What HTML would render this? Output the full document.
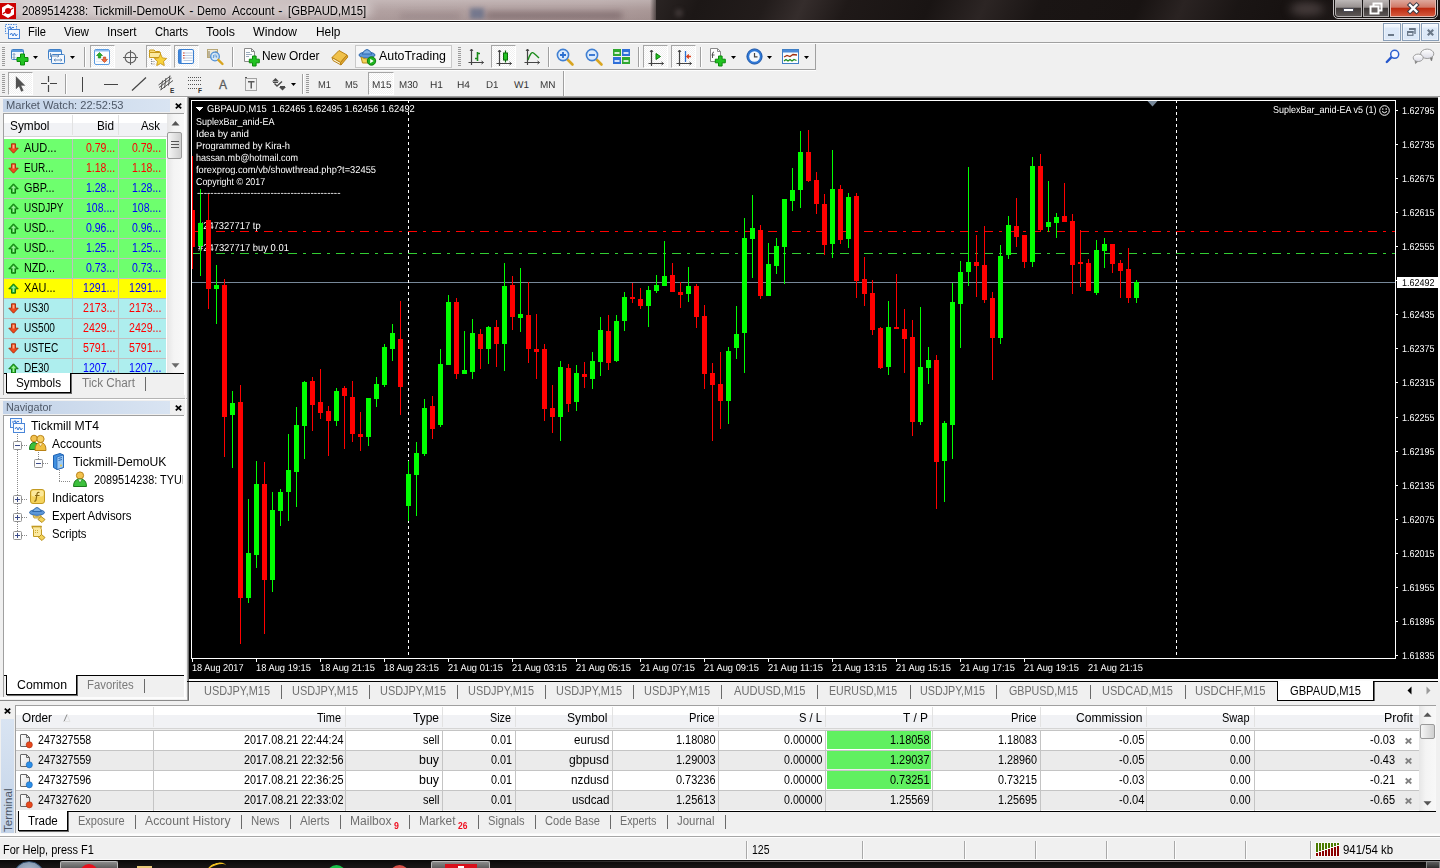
<!DOCTYPE html>
<html><head><meta charset="utf-8"><title>2089514238: Tickmill-DemoUK - Demo Account - [GBPAUD,M15]</title>
<style>
html,body{margin:0;padding:0}
body{width:1440px;height:868px;position:relative;overflow:hidden;background:#f0f0f0;font-family:"Liberation Sans",sans-serif}
.r{position:absolute;display:block}
.t{position:absolute;white-space:pre;display:block}
svg{overflow:visible}
</style></head><body>
<div class="r" style="left:0;top:0;width:1440px;height:20px;overflow:hidden;background:#1b1615"><div class="r" style="left:0;top:0;width:656px;height:20px;background:linear-gradient(90deg,#cabfc0 0,#bdafb0 110px,#b2a1a1 380px,#ae9c9c 600px,#a89695 656px)"></div><div class="r" style="left:0;top:0;width:656px;height:20px;background:linear-gradient(180deg,rgba(255,255,255,.24) 0,rgba(255,255,255,.1) 6px,rgba(255,255,255,0) 11px,rgba(40,20,20,.05) 19px)"></div><div class="r" style="left:18px;top:3px;width:355px;height:15px;border-radius:8px;background:rgba(255,255,255,.34);filter:blur(5px)"></div><div class="r" style="left:486px;top:12px;width:136px;height:7px;background:rgba(70,50,55,.38);filter:blur(3px)"></div><div class="r" style="left:400px;top:13px;width:60px;height:6px;background:rgba(70,50,55,.15);filter:blur(3px)"></div><div class="r" style="left:470px;top:8px;width:14px;height:11px;background:rgba(70,90,130,.55);filter:blur(2px)"></div><div class="r" style="left:650px;top:-2px;width:10px;height:24px;background:linear-gradient(90deg,rgba(27,22,21,0),#1b1615);"></div><div class="r" style="left:656px;top:0;width:784px;height:20px;background:linear-gradient(115deg,#2a2423 0,#1c1716 40px,#221c1b 100px,#352d2c 135px,#1f1918 175px,#191413 250px,#2c2524 300px,#1a1514 350px,#181312 440px,#2a2322 480px,#1a1514 530px,#15100f 600px,#241e1d 640px,#1b1615 700px)"></div><div class="r" style="left:1290px;top:2px;width:34px;height:14px;border-radius:50%;background:rgba(120,105,105,.5);filter:blur(5px)"></div><div class="r" style="left:675px;top:9px;width:8px;height:8px;border-radius:50%;background:rgba(90,80,80,.5);filter:blur(2px)"></div></div>
<div class="r" style="left:0px;top:20px;width:1440px;height:1px;background:rgba(255,255,255,.6);"></div>
<div class="r" style="left:0px;top:21px;width:1440px;height:1px;background:#141010;"></div>
<div class="r" style="left:0px;top:22px;width:1440px;height:1px;background:#ffffff;"></div>
<div class="r" style="left:0px;top:2px;width:16px;height:1px;background:rgba(255,255,255,.35);"></div>
<svg class="r" style="left:0px;top:3px;" width="16" height="16" viewBox="0 0 16 16"><rect width="16" height="16" fill="#cc0000"/><path d="M8 1 L14 4.400 V11.600 L8 15 L2 11.600 V4.400 Z" fill="#fff"/><circle cx="8" cy="7.900" r="3" fill="#cc0000"/><path d="M2.800 10.800 L6 8.800 M13.200 5 L10 7" stroke="#cc0000" stroke-width="1.300"/></svg>
<span class="t" style="top:5px;font-size:12.5px;line-height:12.5px;color:#000;left:21.80px;transform:scaleX(0.9068);transform-origin:0 0;text-shadow:0 0 5px rgba(255,255,255,.7);">2089514238:</span>
<span class="t" style="top:5px;font-size:12.5px;line-height:12.5px;color:#000;left:93.00px;transform:scaleX(0.9576);transform-origin:0 0;text-shadow:0 0 5px rgba(255,255,255,.7);">Tickmill-DemoUK</span>
<span class="t" style="top:5px;font-size:12.5px;line-height:12.5px;color:#000;left:189.30px;text-shadow:0 0 5px rgba(255,255,255,.7);">-</span>
<span class="t" style="top:5px;font-size:12.5px;line-height:12.5px;color:#000;left:196.80px;transform:scaleX(0.8757);transform-origin:0 0;text-shadow:0 0 5px rgba(255,255,255,.7);">Demo</span>
<span class="t" style="top:5px;font-size:12.5px;line-height:12.5px;color:#000;left:232.00px;transform:scaleX(0.9409);transform-origin:0 0;text-shadow:0 0 5px rgba(255,255,255,.7);">Account</span>
<span class="t" style="top:5px;font-size:12.5px;line-height:12.5px;color:#000;left:278.30px;text-shadow:0 0 5px rgba(255,255,255,.7);">-</span>
<span class="t" style="top:5px;font-size:12.5px;line-height:12.5px;color:#000;left:287.80px;transform:scaleX(0.9029);transform-origin:0 0;text-shadow:0 0 5px rgba(255,255,255,.7);">[GBPAUD,M15]</span>
<div class="r" style="left:1333px;top:-1px;width:105px;height:20px;border-radius:0 0 5px 5px;border:1px solid #c4c0c0;box-sizing:border-box;background:#161211"></div>
<div class="r" style="left:1335px;top:0;width:101px;height:17px;border-radius:0 0 3px 3px;overflow:hidden"><div class="r" style="left:0;top:0;width:27px;height:17px;box-sizing:border-box;border:1px solid #b4b0b0;border-top:none;border-radius:0 0 0 3px;background:linear-gradient(180deg,#bdb8b7 0,#979190 45%,#3f3a39 52%,#5c5655 100%)"></div><div class="r" style="left:28px;top:0;width:26px;height:17px;box-sizing:border-box;border:1px solid #b4b0b0;border-top:none;background:linear-gradient(180deg,#bdb8b7 0,#979190 45%,#3f3a39 52%,#5c5655 100%)"></div><div class="r" style="left:55px;top:0;width:46px;height:17px;box-sizing:border-box;border:1px solid #e4b8b0;border-top:none;border-radius:0 0 3px 0;background:linear-gradient(180deg,#dea89c 0,#d07866 45%,#bd2a10 52%,#d4583c 100%)"></div></div>
<svg class="r" style="left:1334px;top:0px;" width="103" height="18" viewBox="0 0 103 18"><rect x="9.5" y="8.5" width="10" height="3" fill="#fff" stroke="#4a4a55" stroke-width="1"/><rect x="39.5" y="3.5" width="8" height="7" fill="none" stroke="#fff" stroke-width="2"/><rect x="36.5" y="6.5" width="8" height="7" fill="#6a6463" stroke="#fff" stroke-width="2"/><path d="M76 5 L82.500 11.500 M82.500 5 L76 11.500" stroke="#3c3c48" stroke-width="4.4" stroke-linecap="square"/><path d="M76 5 L82.500 11.500 M82.500 5 L76 11.500" stroke="#fff" stroke-width="2.4" stroke-linecap="square"/></svg>
<div class="r" style="left:0px;top:23px;width:1440px;height:19px;background:#f0f0f0;"></div>
<div class="r" style="left:0px;top:42px;width:1440px;height:1px;background:#a0a0a0;"></div>
<div class="r" style="left:0px;top:43px;width:1440px;height:1px;background:#fdfdfd;"></div>
<svg class="r" style="left:5px;top:24px;" width="16" height="16" viewBox="0 0 16 16"><rect x="0.5" y="0.5" width="11" height="9" fill="#eef4fc" stroke="#4a86d8" stroke-dasharray="1.5 1"/><rect x="3.5" y="5.5" width="11" height="9" fill="#f4f8fe" stroke="#4a86d8"/><path d="M5 11 l1.5 -2 l1.5 3 l1.5 -3 l1.5 3 l1.5 -2" stroke="#3b7bd6" fill="none" stroke-width="1"/><path d="M2 4 h2 l1 -1.5 l1 2.5 l1 -1.5 h2" stroke="#3b7bd6" fill="none" stroke-width="1"/></svg>
<span class="t" style="top:26px;font-size:12px;line-height:12px;color:#000;left:28.00px;transform:scaleX(0.9305);transform-origin:0 0;">File</span>
<span class="t" style="top:26px;font-size:12px;line-height:12px;color:#000;left:64.00px;transform:scaleX(0.9691);transform-origin:0 0;">View</span>
<span class="t" style="top:26px;font-size:12px;line-height:12px;color:#000;left:106.50px;transform:scaleX(0.9828);transform-origin:0 0;">Insert</span>
<span class="t" style="top:26px;font-size:12px;line-height:12px;color:#000;left:154.50px;transform:scaleX(0.9337);transform-origin:0 0;">Charts</span>
<span class="t" style="top:26px;font-size:12px;line-height:12px;color:#000;left:206.00px;transform:scaleX(1.0351);transform-origin:0 0;">Tools</span>
<span class="t" style="top:26px;font-size:12px;line-height:12px;color:#000;left:253.00px;transform:scaleX(1.0307);transform-origin:0 0;">Window</span>
<span class="t" style="top:26px;font-size:12px;line-height:12px;color:#000;left:315.50px;transform:scaleX(0.9924);transform-origin:0 0;">Help</span>
<div class="r" style="left:1383px;top:23px;width:18px;height:18px;box-sizing:border-box;border:1px solid #8a9fb8;background:linear-gradient(180deg,#f2f7fd 0,#eef4fc 3px,#dde9f8 4px,#dce8f7 100%);box-shadow:inset 0 0 0 1px rgba(255,255,255,.4)"></div>
<div class="r" style="left:1402px;top:23px;width:18px;height:18px;box-sizing:border-box;border:1px solid #8a9fb8;background:linear-gradient(180deg,#f2f7fd 0,#eef4fc 3px,#dde9f8 4px,#dce8f7 100%);box-shadow:inset 0 0 0 1px rgba(255,255,255,.4)"></div>
<div class="r" style="left:1421px;top:23px;width:18px;height:18px;box-sizing:border-box;border:1px solid #8a9fb8;background:linear-gradient(180deg,#f2f7fd 0,#eef4fc 3px,#dde9f8 4px,#dce8f7 100%);box-shadow:inset 0 0 0 1px rgba(255,255,255,.4)"></div>
<svg class="r" style="left:1383px;top:23px;" width="56" height="18" viewBox="0 0 56 18"><rect x="5" y="11" width="6" height="2" fill="#6a7888"/><path d="M26.500 6 h5.500 v5" fill="none" stroke="#6a7888" stroke-width="1.400"/><rect x="26" y="5" width="6.500" height="2" fill="#6a7888"/><rect x="24.600" y="8.600" width="5.300" height="3.700" fill="#e6eefa" stroke="#6a7888" stroke-width="1.200"/><rect x="24" y="8" width="6.500" height="2" fill="#6a7888"/><path d="M44.800 6.800 L50.200 12.200 M50.200 6.800 L44.800 12.200" stroke="#6a7888" stroke-width="2.200"/></svg>
<div class="r" style="left:0px;top:44px;width:1440px;height:52px;background:#f0f0f0;"></div>
<div class="r" style="left:0px;top:69px;width:816px;height:1px;background:#a0a0a0;"></div>
<div class="r" style="left:0px;top:70px;width:816px;height:1px;background:#fdfdfd;"></div>
<div class="r" style="left:815px;top:44px;width:1px;height:26px;background:#a0a0a0;"></div>
<div class="r" style="left:0px;top:96px;width:1440px;height:1px;background:#a0a0a0;"></div>
<div class="r" style="left:563px;top:71px;width:1px;height:25px;background:#a0a0a0;"></div>
<div class="r" style="left:564px;top:71px;width:1px;height:25px;background:#fdfdfd;"></div>
<svg class="r" style="left:2px;top:47px;" width="3" height="20" viewBox="0 0 3 20"><rect x="0" y="0" width="3" height="1" fill="#9a9a9a"/><rect x="0" y="2" width="3" height="1" fill="#9a9a9a"/><rect x="0" y="4" width="3" height="1" fill="#9a9a9a"/><rect x="0" y="6" width="3" height="1" fill="#9a9a9a"/><rect x="0" y="8" width="3" height="1" fill="#9a9a9a"/><rect x="0" y="10" width="3" height="1" fill="#9a9a9a"/><rect x="0" y="12" width="3" height="1" fill="#9a9a9a"/><rect x="0" y="14" width="3" height="1" fill="#9a9a9a"/><rect x="0" y="16" width="3" height="1" fill="#9a9a9a"/><rect x="0" y="18" width="3" height="1" fill="#9a9a9a"/></svg>
<svg class="r" style="left:11px;top:48px;" width="18" height="18" viewBox="0 0 18 18"><rect x="0.5" y="1.5" width="12" height="10" rx="1" fill="#f2f7fd" stroke="#3f7fc6"/><rect x="1" y="2" width="11" height="2" fill="#5c9be0"/><path d="M3 5.5 v5 M1.8 6.8 L3 5.5 L4.2 6.8 M1.8 9.2 L3 10.5 L4.2 9.2" stroke="#7a96b8" fill="none"/><path d="M9.5 6 h4 v3.5 h3.500 v4 h-3.500 v3.500 h-4 v-3.500 h-3.500 v-4 h3.500 z" fill="#22c322" stroke="#0a8a0a" stroke-width="1"/></svg>
<svg class="r" style="left:33px;top:56px;" width="5" height="3" viewBox="0 0 5 3"><path d="M0 0 h5 l-2.5 3 z" fill="#000"/></svg>
<svg class="r" style="left:48px;top:48px;" width="18" height="18" viewBox="0 0 18 18"><rect x="0.5" y="1.500" width="13" height="10" rx="1" fill="#f2f7fd" stroke="#3f7fc6"/><rect x="1" y="2" width="12" height="2" fill="#5c9be0"/><rect x="3.500" y="6.500" width="13" height="9" rx="1" fill="#f2f7fd" stroke="#3f7fc6"/><path d="M2.500 5 v4 M3 8 h8 M9.500 6.800 L11 8 L9.500 9.200" stroke="#6d8fb8" fill="none"/><path d="M6 12 h8 M7.500 10.800 L6 12 L7.500 13.200 M12.500 10.800 L14 12 L12.500 13.200" stroke="#6d8fb8" fill="none"/></svg>
<svg class="r" style="left:70px;top:56px;" width="5" height="3" viewBox="0 0 5 3"><path d="M0 0 h5 l-2.5 3 z" fill="#000"/></svg>
<div class="r" style="left:84px;top:47px;width:1px;height:20px;background:#a0a0a0;"></div>
<div class="r" style="left:85px;top:47px;width:1px;height:20px;background:#ffffff;"></div>
<div class="r" style="left:90px;top:45px;width:25px;height:23px;box-sizing:border-box;border:1px solid #fff;border-top-color:#a6a6a6;border-left-color:#a6a6a6;background:repeating-conic-gradient(#ffffff 0 25%,#f0f0f0 0 50%) 0 0/2px 2px"></div>
<svg class="r" style="left:94px;top:49px;" width="17" height="17" viewBox="0 0 17 17"><rect x="0.500" y="0.500" width="15" height="15" rx="1.500" fill="#fbfdff" stroke="#5b9be0"/><rect x="1" y="1" width="14" height="1.500" fill="#8fbdf0"/><path d="M2 12.500 h12 M2 10 h12" stroke="#e3e9f2" stroke-width="1"/><path d="M5.500 3.500 l3 3 h-1.800 v2.500 h-2.400 v-2.500 h-1.800 z" fill="#25b325" stroke="#0c7a0c" stroke-width=".6"/><path d="M10.500 13.500 l-3 -3 h1.800 v-2.500 h2.400 v2.500 h1.800 z" fill="#f06a3a" stroke="#b83a10" stroke-width=".6"/></svg>
<svg class="r" style="left:122px;top:49px;" width="16" height="16" viewBox="0 0 16 16"><circle cx="8.500" cy="8.500" r="5.400" fill="none" stroke="#5e5e5e" stroke-width="1.100"/><path d="M8.500 1 v15 M1 8.500 h15" stroke="#5e5e5e" stroke-width="1"/></svg>
<div class="r" style="left:146px;top:45px;width:25px;height:23px;box-sizing:border-box;border:1px solid #fff;border-top-color:#a6a6a6;border-left-color:#a6a6a6;background:repeating-conic-gradient(#ffffff 0 25%,#f0f0f0 0 50%) 0 0/2px 2px"></div>
<svg class="r" style="left:149px;top:48px;" width="19" height="19" viewBox="0 0 19 19"><path d="M0.500 4.500 v-2.500 h4.500 l1.500 1.500 h4 v2" fill="#f7d977" stroke="#c79a1c"/><path d="M0.500 4.500 h11 v5 h-11 z" fill="#fbe9a0" stroke="#c79a1c"/><path d="M2.500 11 v5 M2.500 13.500 h3 M2.500 16 h3" stroke="#888" stroke-dasharray="1 1" fill="none"/><path d="M11.500 6 l1.900 3.900 l4.200 .6 l-3.100 2.900 l.8 4.200 l-3.800 -2 l-3.800 2 l.8 -4.200 l-3.100 -2.900 l4.200 -.6 z" fill="#f8d23a" stroke="#c8961a" stroke-width=".9"/></svg>
<div class="r" style="left:174px;top:45px;width:25px;height:23px;box-sizing:border-box;border:1px solid #fff;border-top-color:#a6a6a6;border-left-color:#a6a6a6;background:repeating-conic-gradient(#ffffff 0 25%,#f0f0f0 0 50%) 0 0/2px 2px"></div>
<svg class="r" style="left:178px;top:49px;" width="17" height="17" viewBox="0 0 17 17"><rect x="0.500" y="0.500" width="15" height="14" rx="1.500" fill="#fbfdff" stroke="#3b7fd0" stroke-width="1.100"/><rect x="1" y="1" width="2.600" height="13" fill="#3f86dc"/><path d="M5.500 4 h9 M5.500 6.500 h9 M5.500 9 h9 M5.500 11.500 h9" stroke="#bccbe0" stroke-width="1"/><path d="M5 4 h1.500 M5 6.500 h1.500 M5 9 h1.500" stroke="#e0442c" stroke-width="1.200"/></svg>
<svg class="r" style="left:206px;top:47px;" width="19" height="20" viewBox="0 0 19 20"><rect x="1.500" y="2.500" width="10" height="8" fill="#efe9d6" stroke="#b8a878"/><path d="M3 4 v6 M10 4 v6" stroke="#8a7c58"/><circle cx="9" cy="9.500" r="4.300" fill="#cfe6fb" fill-opacity=".85" stroke="#4f8fd6" stroke-width="1.300"/><path d="M7.500 8 v3 M9 7.300 v2.500 M10.500 8.500 v2" stroke="#4f8fd6" stroke-width=".8"/><path d="M12.300 12.800 L16.500 17" stroke="#d9a520" stroke-width="2.400" stroke-linecap="round"/></svg>
<div class="r" style="left:232px;top:47px;width:1px;height:20px;background:#a0a0a0;"></div>
<div class="r" style="left:233px;top:47px;width:1px;height:20px;background:#ffffff;"></div>
<svg class="r" style="left:243px;top:48px;" width="18" height="18" viewBox="0 0 18 18"><path d="M1.500 0.500 h7 l3 3 v10 h-10 z" fill="#fdfdfd" stroke="#8a8a8a"/><path d="M8.500 0.500 v3 h3" fill="none" stroke="#8a8a8a"/><path d="M3 4.500 h4 M3 6.500 h6 M3 8.500 h3" stroke="#9ab" stroke-width="1"/><path d="M9.500 8 h3.600 v3.200 h3.200 v3.600 h-3.200 v3.200 h-3.600 v-3.200 h-3.200 v-3.600 h3.200 z" fill="#22c322" stroke="#0a8a0a"/></svg>
<span class="t" style="top:50px;font-size:12px;line-height:12px;color:#000;left:262.00px;transform:scaleX(0.9911);transform-origin:0 0;">New Order</span>
<svg class="r" style="left:331px;top:48px;" width="18" height="18" viewBox="0 0 18 18"><path d="M1 9.500 L8 2.500 L16 7 L9.500 14.500 Z" fill="#f0c14a" stroke="#b98216"/><path d="M1 9.500 L2 12.500 L10 17 L9.500 14.500 Z" fill="#fff4cf" stroke="#b98216"/><path d="M9.500 14.500 L16 7 L16.800 9 L10 17 Z" fill="#e0a62c" stroke="#b98216"/></svg>
<div class="r" style="left:355px;top:45px;width:97px;height:23px;box-sizing:border-box;border:1px solid #c9c9c9;background:#f7f7f7"></div>
<svg class="r" style="left:358px;top:47px;" width="20" height="20" viewBox="0 0 20 20"><ellipse cx="9" cy="8" rx="8" ry="3" fill="#5d97d8" stroke="#2f69ad"/><path d="M4 7 q5 -9 10 0 z" fill="#7fb1e6" stroke="#2f69ad"/><path d="M3 10 q6 4 12 0 l-1.500 6 h-9 z" fill="#f4d35a" stroke="#b78f1c"/><circle cx="13.500" cy="14" r="4.200" fill="#1fb31f" stroke="#0b7d0b"/><path d="M12.200 11.800 v4.400 l3.500 -2.200 z" fill="#fff"/></svg>
<span class="t" style="top:50px;font-size:12px;line-height:12px;color:#000;left:379.00px;transform:scaleX(1.0318);transform-origin:0 0;">AutoTrading</span>
<svg class="r" style="left:458px;top:47px;" width="3" height="20" viewBox="0 0 3 20"><rect x="0" y="0" width="3" height="1" fill="#9a9a9a"/><rect x="0" y="2" width="3" height="1" fill="#9a9a9a"/><rect x="0" y="4" width="3" height="1" fill="#9a9a9a"/><rect x="0" y="6" width="3" height="1" fill="#9a9a9a"/><rect x="0" y="8" width="3" height="1" fill="#9a9a9a"/><rect x="0" y="10" width="3" height="1" fill="#9a9a9a"/><rect x="0" y="12" width="3" height="1" fill="#9a9a9a"/><rect x="0" y="14" width="3" height="1" fill="#9a9a9a"/><rect x="0" y="16" width="3" height="1" fill="#9a9a9a"/><rect x="0" y="18" width="3" height="1" fill="#9a9a9a"/></svg>
<svg class="r" style="left:468px;top:49px;" width="17" height="17" viewBox="0 0 17 17"><path d="M3.500 0 v16 M0.500 13.500 h15" stroke="#444" stroke-width="1.200" fill="none"/><path d="M2 2 L3.500 0 L5 2 M13.500 12 L15.500 13.500 L13.500 15" stroke="#444" fill="none"/><path d="M9.500 3 v9 M7 9.500 h2.500 M9.500 4.500 h2.500" stroke="#1a8a1a" stroke-width="1.600" fill="none"/></svg>
<div class="r" style="left:491px;top:45px;width:25px;height:23px;box-sizing:border-box;border:1px solid #fff;border-top-color:#a6a6a6;border-left-color:#a6a6a6;background:repeating-conic-gradient(#ffffff 0 25%,#f0f0f0 0 50%) 0 0/2px 2px"></div>
<svg class="r" style="left:496px;top:50px;" width="17" height="17" viewBox="0 0 17 17"><path d="M3.500 0 v16 M0.500 13.500 h15" stroke="#444" stroke-width="1.200" fill="none"/><path d="M2 2 L3.500 0 L5 2 M13.500 12 L15.500 13.500 L13.500 15" stroke="#444" fill="none"/><path d="M9.500 0.500 v12" stroke="#0b6d0b" stroke-width="1.200"/><rect x="7.500" y="3" width="4" height="7" fill="#22c322" stroke="#0b6d0b"/></svg>
<svg class="r" style="left:524px;top:49px;" width="17" height="17" viewBox="0 0 17 17"><path d="M3.500 0 v16 M0.500 13.500 h15" stroke="#444" stroke-width="1.200" fill="none"/><path d="M2 2 L3.500 0 L5 2 M13.500 12 L15.500 13.500 L13.500 15" stroke="#444" fill="none"/><path d="M4 11 Q7 2 9.500 4 T15 9" stroke="#1a8a1a" stroke-width="1.400" fill="none"/></svg>
<div class="r" style="left:548px;top:47px;width:1px;height:20px;background:#a0a0a0;"></div>
<div class="r" style="left:549px;top:47px;width:1px;height:20px;background:#ffffff;"></div>
<svg class="r" style="left:556px;top:48px;" width="19" height="19" viewBox="0 0 19 19"><path d="M11 11 L16.500 16.500" stroke="#d9a520" stroke-width="2.600" stroke-linecap="round"/><circle cx="7" cy="7" r="5.600" fill="#dcebfb" stroke="#3f7fd2" stroke-width="1.600"/><path d="M4 7 h6 M7 4 v6" stroke="#2b6fd0" stroke-width="1.800"/></svg>
<svg class="r" style="left:585px;top:48px;" width="19" height="19" viewBox="0 0 19 19"><path d="M11 11 L16.500 16.500" stroke="#d9a520" stroke-width="2.600" stroke-linecap="round"/><circle cx="7" cy="7" r="5.600" fill="#dcebfb" stroke="#3f7fd2" stroke-width="1.600"/><path d="M4 7 h6" stroke="#2b6fd0" stroke-width="1.800"/></svg>
<svg class="r" style="left:613px;top:48px;" width="18" height="18" viewBox="0 0 18 18"><rect x="0" y="1" width="8" height="7" fill="#2fa82f"/><rect x="9" y="1" width="8" height="7" fill="#2f6fd8"/><rect x="0" y="9" width="8" height="7" fill="#2f6fd8"/><rect x="9" y="9" width="8" height="7" fill="#2fa82f"/><rect x="1.500" y="4" width="5" height="2" fill="#d8f0d8"/><rect x="10.500" y="4" width="5" height="2" fill="#d4e2fb"/><rect x="1.500" y="12" width="5" height="2" fill="#d4e2fb"/><rect x="10.500" y="12" width="5" height="2" fill="#d8f0d8"/></svg>
<div class="r" style="left:638px;top:47px;width:1px;height:20px;background:#a0a0a0;"></div>
<div class="r" style="left:639px;top:47px;width:1px;height:20px;background:#ffffff;"></div>
<div class="r" style="left:643px;top:45px;width:25px;height:23px;box-sizing:border-box;border:1px solid #fff;border-top-color:#a6a6a6;border-left-color:#a6a6a6;background:repeating-conic-gradient(#ffffff 0 25%,#f0f0f0 0 50%) 0 0/2px 2px"></div>
<svg class="r" style="left:648px;top:50px;" width="17" height="17" viewBox="0 0 17 17"><path d="M3.500 0 v16 M0.500 13.500 h15" stroke="#444" stroke-width="1.200" fill="none"/><path d="M2 2 L3.500 0 L5 2 M13.500 12 L15.500 13.500 L13.500 15" stroke="#444" fill="none"/><path d="M8 3.500 L12.500 6.500 L8 9.500 Z" fill="#22c322" stroke="#0b7d0b"/></svg>
<div class="r" style="left:671px;top:45px;width:25px;height:23px;box-sizing:border-box;border:1px solid #fff;border-top-color:#a6a6a6;border-left-color:#a6a6a6;background:repeating-conic-gradient(#ffffff 0 25%,#f0f0f0 0 50%) 0 0/2px 2px"></div>
<svg class="r" style="left:676px;top:50px;" width="17" height="17" viewBox="0 0 17 17"><path d="M3.500 0 v16 M0.500 13.500 h15" stroke="#444" stroke-width="1.200" fill="none"/><path d="M2 2 L3.500 0 L5 2 M13.500 12 L15.500 13.500 L13.500 15" stroke="#444" fill="none"/><path d="M9.500 1 v11" stroke="#2b6fd0" stroke-width="1.300"/><path d="M15 6.500 h-4 M12.800 4.500 L10.800 6.500 L12.800 8.500" stroke="#d8401c" stroke-width="1.300" fill="none"/></svg>
<div class="r" style="left:700px;top:47px;width:1px;height:20px;background:#a0a0a0;"></div>
<div class="r" style="left:701px;top:47px;width:1px;height:20px;background:#ffffff;"></div>
<svg class="r" style="left:709px;top:48px;" width="19" height="19" viewBox="0 0 19 19"><path d="M1.500 0.500 h7 l3 3 v10 h-10 z" fill="#fdfdfd" stroke="#8a8a8a"/><path d="M8.500 0.500 v3 h3" fill="none" stroke="#8a8a8a"/><path d="M5 4 q-1.500 0 -1.500 2 v4 M2.500 7 h3" stroke="#555" fill="none"/><path d="M9.500 8 h3.600 v3.200 h3.200 v3.600 h-3.200 v3.200 h-3.600 v-3.200 h-3.200 v-3.600 h3.200 z" fill="#22c322" stroke="#0a8a0a"/></svg>
<svg class="r" style="left:731px;top:56px;" width="5" height="3" viewBox="0 0 5 3"><path d="M0 0 h5 l-2.5 3 z" fill="#000"/></svg>
<svg class="r" style="left:746px;top:48px;" width="18" height="18" viewBox="0 0 18 18"><circle cx="8.500" cy="8.500" r="7.600" fill="#2f78d6" stroke="#1b55a8"/><circle cx="8.500" cy="8.500" r="5.300" fill="#f4f8fd"/><path d="M8.500 5 v3.800 h3" stroke="#444" stroke-width="1.200" fill="none"/></svg>
<svg class="r" style="left:767px;top:56px;" width="5" height="3" viewBox="0 0 5 3"><path d="M0 0 h5 l-2.5 3 z" fill="#000"/></svg>
<svg class="r" style="left:782px;top:49px;" width="18" height="16" viewBox="0 0 18 16"><rect x="0.500" y="0.500" width="16" height="14" fill="#fbfdff" stroke="#3f7fc6"/><rect x="1" y="1" width="15" height="2.500" fill="#4a8ad8"/><path d="M2 8 l3 -1.500 l3 1 l3 -2 l4 .5" stroke="#a03010" stroke-width="1.300" fill="none"/><path d="M2 12 l2 -1.500 l2 1.500 l2 -1.500 l2 1.500 l2 -1.500 l2.500 1" stroke="#1a8a1a" stroke-width="1.300" fill="none"/></svg>
<svg class="r" style="left:804px;top:56px;" width="5" height="3" viewBox="0 0 5 3"><path d="M0 0 h5 l-2.5 3 z" fill="#000"/></svg>
<svg class="r" style="left:1384px;top:48px;" width="16" height="17" viewBox="0 0 16 17"><path d="M2.800 14 L7.500 9.200" stroke="#2456cc" stroke-width="2.400" stroke-linecap="round"/><circle cx="10.700" cy="6.300" r="4" fill="#f6f8ff" stroke="#2c5fd0" stroke-width="1.500"/></svg>
<svg class="r" style="left:1412px;top:48px;" width="26" height="18" viewBox="0 0 26 18"><defs><linearGradient id="cb" x1="0" y1="0" x2="0" y2="1"><stop offset="0" stop-color="#ffffff"/><stop offset="1" stop-color="#dcdce6"/></linearGradient></defs><path d="M18 9.800 L19.500 13 L20.500 9.500 Z" fill="#777" stroke="#777" stroke-width=".6"/><ellipse cx="15.200" cy="5.800" rx="6.600" ry="4.700" fill="url(#cb)" stroke="#9c9c9c" stroke-width="1"/><path d="M3 12.500 L3.500 15.600 L6 13.300 Z" fill="#777" stroke="#777" stroke-width=".6"/><ellipse cx="6.200" cy="9.800" rx="5" ry="3.700" fill="url(#cb)" stroke="#9c9c9c" stroke-width="1"/></svg>
<svg class="r" style="left:2px;top:74px;" width="3" height="20" viewBox="0 0 3 20"><rect x="0" y="0" width="3" height="1" fill="#9a9a9a"/><rect x="0" y="2" width="3" height="1" fill="#9a9a9a"/><rect x="0" y="4" width="3" height="1" fill="#9a9a9a"/><rect x="0" y="6" width="3" height="1" fill="#9a9a9a"/><rect x="0" y="8" width="3" height="1" fill="#9a9a9a"/><rect x="0" y="10" width="3" height="1" fill="#9a9a9a"/><rect x="0" y="12" width="3" height="1" fill="#9a9a9a"/><rect x="0" y="14" width="3" height="1" fill="#9a9a9a"/><rect x="0" y="16" width="3" height="1" fill="#9a9a9a"/><rect x="0" y="18" width="3" height="1" fill="#9a9a9a"/></svg>
<div class="r" style="left:8px;top:72px;width:25px;height:23px;box-sizing:border-box;border:1px solid #fff;border-top-color:#a6a6a6;border-left-color:#a6a6a6;background:repeating-conic-gradient(#ffffff 0 25%,#f0f0f0 0 50%) 0 0/2px 2px"></div>
<svg class="r" style="left:15px;top:76px;" width="11" height="17" viewBox="0 0 11 17"><path d="M1 0.500 V13 L4 10.200 L6.300 15.500 L8.300 14.600 L6 9.500 H10 Z" fill="#505050" stroke="#505050" stroke-width=".3"/></svg>
<svg class="r" style="left:41px;top:76px;" width="16" height="16" viewBox="0 0 16 16"><path d="M7.500 0 v6 M7.500 9 v7 M0 7.500 h6 M9 7.500 h7" stroke="#444" stroke-width="1.200"/></svg>
<div class="r" style="left:65px;top:74px;width:1px;height:20px;background:#a0a0a0;"></div>
<div class="r" style="left:66px;top:74px;width:1px;height:20px;background:#ffffff;"></div>
<div class="r" style="left:82px;top:77px;width:1px;height:15px;background:#444;"></div>
<div class="r" style="left:104px;top:84px;width:14px;height:1px;background:#444;"></div>
<svg class="r" style="left:131px;top:76px;" width="16" height="16" viewBox="0 0 16 16"><path d="M1 14.500 L15 1.500" stroke="#444" stroke-width="1.200"/></svg>
<svg class="r" style="left:158px;top:75px;" width="17" height="17" viewBox="0 0 17 17"><path d="M1 12.500 L13.500 3 M2.500 15 L15 5.500 M0.500 10 L12 1.300" stroke="#555" stroke-width="1"/><path d="M4.500 5.500 L3 15 M8 3 L6.500 13 M12 0.500 L10.500 10.500" stroke="#555" stroke-width="1"/></svg>
<span class="t" style="top:88px;font-size:6.5px;line-height:6.5px;color:#333;left:170.00px;font-weight:bold;">E</span>
<svg class="r" style="left:188px;top:77px;" width="14" height="13" viewBox="0 0 14 13"><path d="M0 0.500 h13 M0 3.500 h13 M0 7.500 h13 M0 11.500 h9" stroke="#555" stroke-width="1" stroke-dasharray="1 1"/></svg>
<span class="t" style="top:88px;font-size:6.5px;line-height:6.5px;color:#333;left:198.00px;font-weight:bold;">F</span>
<span class="t" style="top:79px;font-size:12px;line-height:12px;color:#5a5a5a;left:218.90px;-webkit-text-stroke:.3px #5a5a5a;">A</span>
<svg class="r" style="left:245px;top:77px;" width="13" height="14" viewBox="0 0 13 14"><rect x="0.500" y="1.500" width="11" height="12" fill="none" stroke="#555" stroke-dasharray="1 1"/><path d="M3 4.800 h6.500 M6.250 4.800 v6.700" stroke="#5a5a5a" stroke-width="1.500"/><rect x="0" y="0" width="2" height="1" fill="#555"/></svg>
<svg class="r" style="left:271px;top:77px;" width="16" height="15" viewBox="0 0 16 15"><path d="M4.500 1 L8 4.500 H1 Z" fill="#4a4a4a"/><path d="M11.500 13.500 L15 10 H8 Z" fill="#4a4a4a"/><path d="M3.500 6.500 L6 9 L11 4.500" stroke="#4a4a4a" stroke-width="1.400" fill="none"/><path d="M2 5.500 h5 M9 9.500 h5" stroke="#4a4a4a" stroke-width="1"/></svg>
<svg class="r" style="left:291px;top:83px;" width="5" height="3" viewBox="0 0 5 3"><path d="M0 0 h5 l-2.5 3 z" fill="#000"/></svg>
<div class="r" style="left:302px;top:74px;width:1px;height:20px;background:#a0a0a0;"></div>
<div class="r" style="left:303px;top:74px;width:1px;height:20px;background:#ffffff;"></div>
<svg class="r" style="left:306px;top:74px;" width="3" height="20" viewBox="0 0 3 20"><rect x="0" y="0" width="3" height="1" fill="#9a9a9a"/><rect x="0" y="2" width="3" height="1" fill="#9a9a9a"/><rect x="0" y="4" width="3" height="1" fill="#9a9a9a"/><rect x="0" y="6" width="3" height="1" fill="#9a9a9a"/><rect x="0" y="8" width="3" height="1" fill="#9a9a9a"/><rect x="0" y="10" width="3" height="1" fill="#9a9a9a"/><rect x="0" y="12" width="3" height="1" fill="#9a9a9a"/><rect x="0" y="14" width="3" height="1" fill="#9a9a9a"/><rect x="0" y="16" width="3" height="1" fill="#9a9a9a"/><rect x="0" y="18" width="3" height="1" fill="#9a9a9a"/></svg>
<div class="r" style="left:368px;top:72px;width:26px;height:23px;box-sizing:border-box;border:1px solid #fff;border-top-color:#a6a6a6;border-left-color:#a6a6a6;background:repeating-conic-gradient(#ffffff 0 25%,#f0f0f0 0 50%) 0 0/2px 2px"></div>
<span class="t" style="top:81px;font-size:10px;line-height:10px;color:#333;left:318.00px;transform:scaleX(0.9348);transform-origin:0 0;text-rendering:geometricPrecision;">M1</span>
<span class="t" style="top:81px;font-size:10px;line-height:10px;color:#333;left:345.00px;transform:scaleX(0.9348);transform-origin:0 0;text-rendering:geometricPrecision;">M5</span>
<span class="t" style="top:81px;font-size:10px;line-height:10px;color:#333;left:371.50px;transform:scaleX(1.0024);transform-origin:0 0;text-rendering:geometricPrecision;">M15</span>
<span class="t" style="top:81px;font-size:10px;line-height:10px;color:#333;left:399.00px;transform:scaleX(0.9767);transform-origin:0 0;text-rendering:geometricPrecision;">M30</span>
<span class="t" style="top:81px;font-size:10px;line-height:10px;color:#333;left:430.00px;transform:scaleX(1.0159);transform-origin:0 0;text-rendering:geometricPrecision;">H1</span>
<span class="t" style="top:81px;font-size:10px;line-height:10px;color:#333;left:457.00px;transform:scaleX(1.0159);transform-origin:0 0;text-rendering:geometricPrecision;">H4</span>
<span class="t" style="top:81px;font-size:10px;line-height:10px;color:#333;left:486.00px;transform:scaleX(0.9768);transform-origin:0 0;text-rendering:geometricPrecision;">D1</span>
<span class="t" style="top:81px;font-size:10px;line-height:10px;color:#333;left:514.00px;transform:scaleX(1.0000);transform-origin:0 0;text-rendering:geometricPrecision;">W1</span>
<span class="t" style="top:81px;font-size:10px;line-height:10px;color:#333;left:540.00px;transform:scaleX(0.9960);transform-origin:0 0;text-rendering:geometricPrecision;">MN</span>
<div class="r" style="left:0px;top:97px;width:187px;height:603px;background:#f0f0f0;"></div>
<div class="r" style="left:0px;top:97px;width:187px;height:1px;background:#ffffff;"></div>
<div class="r" style="left:187px;top:97px;width:1px;height:604px;background:#a8a8a8;"></div>
<div class="r" style="left:188px;top:97px;width:1px;height:604px;background:#6e6e6e;"></div>
<div class="r" style="left:0px;top:697px;width:187px;height:2px;background:#fcfcfc;"></div>
<div class="r" style="left:0px;top:700px;width:189px;height:1px;background:#8a8a8a;"></div>
<div class="r" style="left:3px;top:99px;width:167px;height:13px;background:linear-gradient(90deg,#c3d3e8,#d9e4f2)"></div>
<span class="t" style="top:100px;font-size:11.5px;line-height:11.5px;color:#4d5766;left:5.50px;transform:scaleX(0.9657);transform-origin:0 0;">Market Watch: 22:52:53</span>
<svg class="r" style="left:174.5px;top:102.5px;" width="7" height="6" viewBox="0 0 7 6"><path d="M0.800 0.600 L6.200 5.400 M6.200 0.600 L0.800 5.400" stroke="#000" stroke-width="1.800"/></svg>
<div class="r" style="left:3px;top:113px;width:181px;height:1px;background:#a0a0a0;"></div>
<div class="r" style="left:3px;top:113px;width:1px;height:282px;background:#a0a0a0;"></div>
<div class="r" style="left:184px;top:113px;width:1px;height:282px;background:#ffffff;"></div>
<div class="r" style="left:4px;top:114px;width:163px;height:259px;background:#ffffff;"></div>
<div class="r" style="left:4px;top:114px;width:163px;height:22px;background:linear-gradient(180deg,#ffffff 0,#ffffff 9px,#f1f2f5 9px,#f1f2f5 100%)"></div>
<div class="r" style="left:4px;top:136px;width:163px;height:1px;background:#d5d5d5;"></div>
<div class="r" style="left:72px;top:115px;width:1px;height:20px;background:#e2e2e2;"></div>
<div class="r" style="left:118px;top:115px;width:1px;height:20px;background:#e2e2e2;"></div>
<span class="t" style="top:120px;font-size:12.5px;line-height:12.5px;color:#000;left:10.00px;transform:scaleX(0.9475);transform-origin:0 0;">Symbol</span>
<span class="t" style="top:120px;font-size:12.5px;line-height:12.5px;color:#000;left:96.50px;transform:scaleX(0.9404);transform-origin:0 0;">Bid</span>
<span class="t" style="top:120px;font-size:12.5px;line-height:12.5px;color:#000;left:141.00px;transform:scaleX(0.9115);transform-origin:0 0;">Ask</span>
<div class="r" style="left:4px;top:139px;width:162px;height:234px;overflow:hidden;background:#c0c0c0">
<div class="r" style="left:0px;top:0px;width:68px;height:19px;background:#6eff6e"></div>
<div class="r" style="left:69px;top:0px;width:45px;height:19px;background:#6eff6e"></div>
<div class="r" style="left:115px;top:0px;width:47px;height:19px;background:#6eff6e"></div>
<div class="r" style="left:0px;top:20px;width:68px;height:19px;background:#6eff6e"></div>
<div class="r" style="left:69px;top:20px;width:45px;height:19px;background:#6eff6e"></div>
<div class="r" style="left:115px;top:20px;width:47px;height:19px;background:#6eff6e"></div>
<div class="r" style="left:0px;top:40px;width:68px;height:19px;background:#6eff6e"></div>
<div class="r" style="left:69px;top:40px;width:45px;height:19px;background:#6eff6e"></div>
<div class="r" style="left:115px;top:40px;width:47px;height:19px;background:#6eff6e"></div>
<div class="r" style="left:0px;top:60px;width:68px;height:19px;background:#6eff6e"></div>
<div class="r" style="left:69px;top:60px;width:45px;height:19px;background:#6eff6e"></div>
<div class="r" style="left:115px;top:60px;width:47px;height:19px;background:#6eff6e"></div>
<div class="r" style="left:0px;top:80px;width:68px;height:19px;background:#6eff6e"></div>
<div class="r" style="left:69px;top:80px;width:45px;height:19px;background:#6eff6e"></div>
<div class="r" style="left:115px;top:80px;width:47px;height:19px;background:#6eff6e"></div>
<div class="r" style="left:0px;top:100px;width:68px;height:19px;background:#6eff6e"></div>
<div class="r" style="left:69px;top:100px;width:45px;height:19px;background:#6eff6e"></div>
<div class="r" style="left:115px;top:100px;width:47px;height:19px;background:#6eff6e"></div>
<div class="r" style="left:0px;top:120px;width:68px;height:19px;background:#6eff6e"></div>
<div class="r" style="left:69px;top:120px;width:45px;height:19px;background:#6eff6e"></div>
<div class="r" style="left:115px;top:120px;width:47px;height:19px;background:#6eff6e"></div>
<div class="r" style="left:0px;top:140px;width:68px;height:19px;background:#ffff00"></div>
<div class="r" style="left:69px;top:140px;width:45px;height:19px;background:#ffff00"></div>
<div class="r" style="left:115px;top:140px;width:47px;height:19px;background:#ffff00"></div>
<div class="r" style="left:0px;top:160px;width:68px;height:19px;background:#aeeeee"></div>
<div class="r" style="left:69px;top:160px;width:45px;height:19px;background:#aeeeee"></div>
<div class="r" style="left:115px;top:160px;width:47px;height:19px;background:#aeeeee"></div>
<div class="r" style="left:0px;top:180px;width:68px;height:19px;background:#aeeeee"></div>
<div class="r" style="left:69px;top:180px;width:45px;height:19px;background:#aeeeee"></div>
<div class="r" style="left:115px;top:180px;width:47px;height:19px;background:#aeeeee"></div>
<div class="r" style="left:0px;top:200px;width:68px;height:19px;background:#aeeeee"></div>
<div class="r" style="left:69px;top:200px;width:45px;height:19px;background:#aeeeee"></div>
<div class="r" style="left:115px;top:200px;width:47px;height:19px;background:#aeeeee"></div>
<div class="r" style="left:0px;top:220px;width:68px;height:19px;background:#aeeeee"></div>
<div class="r" style="left:69px;top:220px;width:45px;height:19px;background:#aeeeee"></div>
<div class="r" style="left:115px;top:220px;width:47px;height:19px;background:#aeeeee"></div>
</div>
<div class="r" style="left:0;top:139px;width:186px;height:234px;overflow:hidden">
<svg class="r" style="left:8px;top:4px;" width="11" height="11" viewBox="0 0 11 11"><path d="M5.500 10.200 L10.200 5.200 H7.500 V0.800 H3.500 V5.200 H0.800 Z" fill="#ee4a1c" stroke="#a82a08" stroke-width=".9"/><path d="M4.600 1.800 h1.800 v3.800 h-1.800 z" fill="#ffb08a"/></svg>
<span class="t" style="top:3px;font-size:12.5px;line-height:12.5px;color:#000;left:24.00px;transform:scaleX(0.8829);transform-origin:0 0;">AUD...</span>
<span class="t" style="top:3px;font-size:12.5px;line-height:12.5px;color:#ff0000;left:85.80px;transform:scaleX(0.8403);transform-origin:0 0;">0.79...</span>
<span class="t" style="top:3px;font-size:12.5px;line-height:12.5px;color:#ff0000;left:131.80px;transform:scaleX(0.8403);transform-origin:0 0;">0.79...</span>
<svg class="r" style="left:8px;top:24px;" width="11" height="11" viewBox="0 0 11 11"><path d="M5.500 10.200 L10.200 5.200 H7.500 V0.800 H3.500 V5.200 H0.800 Z" fill="#ee4a1c" stroke="#a82a08" stroke-width=".9"/><path d="M4.600 1.800 h1.800 v3.800 h-1.800 z" fill="#ffb08a"/></svg>
<span class="t" style="top:23px;font-size:12.5px;line-height:12.5px;color:#000;left:24.00px;transform:scaleX(0.8014);transform-origin:0 0;">EUR...</span>
<span class="t" style="top:23px;font-size:12.5px;line-height:12.5px;color:#ff0000;left:85.80px;transform:scaleX(0.8403);transform-origin:0 0;">1.18...</span>
<span class="t" style="top:23px;font-size:12.5px;line-height:12.5px;color:#ff0000;left:131.80px;transform:scaleX(0.8403);transform-origin:0 0;">1.18...</span>
<svg class="r" style="left:8px;top:44px;" width="11" height="11" viewBox="0 0 11 11"><path d="M5.500 0.800 L10.200 5.800 H7.500 V10.200 H3.500 V5.800 H0.800 Z" fill="#23b123" stroke="#0a6a0a" stroke-width=".9"/><path d="M5.500 2.600 L8 5.200 H6.300 V9 H4.700 V5.200 H3 Z" fill="#9af09a"/></svg>
<span class="t" style="top:43px;font-size:12.5px;line-height:12.5px;color:#000;left:24.00px;transform:scaleX(0.8660);transform-origin:0 0;">GBP...</span>
<span class="t" style="top:43px;font-size:12.5px;line-height:12.5px;color:#0000ff;left:85.80px;transform:scaleX(0.8403);transform-origin:0 0;">1.28...</span>
<span class="t" style="top:43px;font-size:12.5px;line-height:12.5px;color:#0000ff;left:131.80px;transform:scaleX(0.8403);transform-origin:0 0;">1.28...</span>
<svg class="r" style="left:8px;top:64px;" width="11" height="11" viewBox="0 0 11 11"><path d="M5.500 0.800 L10.200 5.800 H7.500 V10.200 H3.500 V5.800 H0.800 Z" fill="#23b123" stroke="#0a6a0a" stroke-width=".9"/><path d="M5.500 2.600 L8 5.200 H6.300 V9 H4.700 V5.200 H3 Z" fill="#9af09a"/></svg>
<span class="t" style="top:63px;font-size:12.5px;line-height:12.5px;color:#000;left:24.00px;transform:scaleX(0.8008);transform-origin:0 0;">USDJPY</span>
<span class="t" style="top:63px;font-size:12.5px;line-height:12.5px;color:#0000ff;left:85.80px;transform:scaleX(0.8403);transform-origin:0 0;">108....</span>
<span class="t" style="top:63px;font-size:12.5px;line-height:12.5px;color:#0000ff;left:131.80px;transform:scaleX(0.8403);transform-origin:0 0;">108....</span>
<svg class="r" style="left:8px;top:84px;" width="11" height="11" viewBox="0 0 11 11"><path d="M5.500 0.800 L10.200 5.800 H7.500 V10.200 H3.500 V5.800 H0.800 Z" fill="#23b123" stroke="#0a6a0a" stroke-width=".9"/><path d="M5.500 2.600 L8 5.200 H6.300 V9 H4.700 V5.200 H3 Z" fill="#9af09a"/></svg>
<span class="t" style="top:83px;font-size:12.5px;line-height:12.5px;color:#000;left:24.00px;transform:scaleX(0.8285);transform-origin:0 0;">USD...</span>
<span class="t" style="top:83px;font-size:12.5px;line-height:12.5px;color:#0000ff;left:85.80px;transform:scaleX(0.8403);transform-origin:0 0;">0.96...</span>
<span class="t" style="top:83px;font-size:12.5px;line-height:12.5px;color:#0000ff;left:131.80px;transform:scaleX(0.8403);transform-origin:0 0;">0.96...</span>
<svg class="r" style="left:8px;top:104px;" width="11" height="11" viewBox="0 0 11 11"><path d="M5.500 0.800 L10.200 5.800 H7.500 V10.200 H3.500 V5.800 H0.800 Z" fill="#23b123" stroke="#0a6a0a" stroke-width=".9"/><path d="M5.500 2.600 L8 5.200 H6.300 V9 H4.700 V5.200 H3 Z" fill="#9af09a"/></svg>
<span class="t" style="top:103px;font-size:12.5px;line-height:12.5px;color:#000;left:24.00px;transform:scaleX(0.8285);transform-origin:0 0;">USD...</span>
<span class="t" style="top:103px;font-size:12.5px;line-height:12.5px;color:#0000ff;left:85.80px;transform:scaleX(0.8403);transform-origin:0 0;">1.25...</span>
<span class="t" style="top:103px;font-size:12.5px;line-height:12.5px;color:#0000ff;left:131.80px;transform:scaleX(0.8403);transform-origin:0 0;">1.25...</span>
<svg class="r" style="left:8px;top:124px;" width="11" height="11" viewBox="0 0 11 11"><path d="M5.500 0.800 L10.200 5.800 H7.500 V10.200 H3.500 V5.800 H0.800 Z" fill="#23b123" stroke="#0a6a0a" stroke-width=".9"/><path d="M5.500 2.600 L8 5.200 H6.300 V9 H4.700 V5.200 H3 Z" fill="#9af09a"/></svg>
<span class="t" style="top:123px;font-size:12.5px;line-height:12.5px;color:#000;left:24.00px;transform:scaleX(0.8585);transform-origin:0 0;">NZD...</span>
<span class="t" style="top:123px;font-size:12.5px;line-height:12.5px;color:#0000ff;left:85.80px;transform:scaleX(0.8403);transform-origin:0 0;">0.73...</span>
<span class="t" style="top:123px;font-size:12.5px;line-height:12.5px;color:#0000ff;left:131.80px;transform:scaleX(0.8403);transform-origin:0 0;">0.73...</span>
<svg class="r" style="left:8px;top:144px;" width="11" height="11" viewBox="0 0 11 11"><path d="M5.500 0.800 L10.200 5.800 H7.500 V10.200 H3.500 V5.800 H0.800 Z" fill="#23b123" stroke="#0a6a0a" stroke-width=".9"/><path d="M5.500 2.600 L8 5.200 H6.300 V9 H4.700 V5.200 H3 Z" fill="#9af09a"/></svg>
<span class="t" style="top:143px;font-size:12.5px;line-height:12.5px;color:#000;left:24.00px;transform:scaleX(0.8720);transform-origin:0 0;">XAU...</span>
<span class="t" style="top:143px;font-size:12.5px;line-height:12.5px;color:#0000ff;left:82.60px;transform:scaleX(0.8474);transform-origin:0 0;">1291...</span>
<span class="t" style="top:143px;font-size:12.5px;line-height:12.5px;color:#0000ff;left:128.60px;transform:scaleX(0.8474);transform-origin:0 0;">1291...</span>
<svg class="r" style="left:8px;top:164px;" width="11" height="11" viewBox="0 0 11 11"><path d="M5.500 10.200 L10.200 5.200 H7.500 V0.800 H3.500 V5.200 H0.800 Z" fill="#ee4a1c" stroke="#a82a08" stroke-width=".9"/><path d="M4.600 1.800 h1.800 v3.800 h-1.800 z" fill="#ffb08a"/></svg>
<span class="t" style="top:163px;font-size:12.5px;line-height:12.5px;color:#000;left:24.00px;transform:scaleX(0.8056);transform-origin:0 0;">US30</span>
<span class="t" style="top:163px;font-size:12.5px;line-height:12.5px;color:#ff0000;left:82.60px;transform:scaleX(0.8474);transform-origin:0 0;">2173...</span>
<span class="t" style="top:163px;font-size:12.5px;line-height:12.5px;color:#ff0000;left:128.60px;transform:scaleX(0.8474);transform-origin:0 0;">2173...</span>
<svg class="r" style="left:8px;top:184px;" width="11" height="11" viewBox="0 0 11 11"><path d="M5.500 10.200 L10.200 5.200 H7.500 V0.800 H3.500 V5.200 H0.800 Z" fill="#ee4a1c" stroke="#a82a08" stroke-width=".9"/><path d="M4.600 1.800 h1.800 v3.800 h-1.800 z" fill="#ffb08a"/></svg>
<span class="t" style="top:183px;font-size:12.5px;line-height:12.5px;color:#000;left:24.00px;transform:scaleX(0.8108);transform-origin:0 0;">US500</span>
<span class="t" style="top:183px;font-size:12.5px;line-height:12.5px;color:#ff0000;left:82.60px;transform:scaleX(0.8474);transform-origin:0 0;">2429...</span>
<span class="t" style="top:183px;font-size:12.5px;line-height:12.5px;color:#ff0000;left:128.60px;transform:scaleX(0.8474);transform-origin:0 0;">2429...</span>
<svg class="r" style="left:8px;top:204px;" width="11" height="11" viewBox="0 0 11 11"><path d="M5.500 10.200 L10.200 5.200 H7.500 V0.800 H3.500 V5.200 H0.800 Z" fill="#ee4a1c" stroke="#a82a08" stroke-width=".9"/><path d="M4.600 1.800 h1.800 v3.800 h-1.800 z" fill="#ffb08a"/></svg>
<span class="t" style="top:203px;font-size:12.5px;line-height:12.5px;color:#000;left:24.00px;transform:scaleX(0.8094);transform-origin:0 0;">USTEC</span>
<span class="t" style="top:203px;font-size:12.5px;line-height:12.5px;color:#ff0000;left:82.60px;transform:scaleX(0.8474);transform-origin:0 0;">5791...</span>
<span class="t" style="top:203px;font-size:12.5px;line-height:12.5px;color:#ff0000;left:128.60px;transform:scaleX(0.8474);transform-origin:0 0;">5791...</span>
<svg class="r" style="left:8px;top:224px;" width="11" height="11" viewBox="0 0 11 11"><path d="M5.500 0.800 L10.200 5.800 H7.500 V10.200 H3.500 V5.800 H0.800 Z" fill="#23b123" stroke="#0a6a0a" stroke-width=".9"/><path d="M5.500 2.600 L8 5.200 H6.300 V9 H4.700 V5.200 H3 Z" fill="#9af09a"/></svg>
<span class="t" style="top:223px;font-size:12.5px;line-height:12.5px;color:#000;left:24.00px;transform:scaleX(0.8056);transform-origin:0 0;">DE30</span>
<span class="t" style="top:223px;font-size:12.5px;line-height:12.5px;color:#0000ff;left:82.60px;transform:scaleX(0.8474);transform-origin:0 0;">1207...</span>
<span class="t" style="top:223px;font-size:12.5px;line-height:12.5px;color:#0000ff;left:128.60px;transform:scaleX(0.8474);transform-origin:0 0;">1207...</span>
</div>
<div class="r" style="left:167px;top:114px;width:17px;height:259px;background:#f0f0f0;"></div>
<div class="r" style="left:167px;top:114px;width:17px;height:259px;background:linear-gradient(90deg,#e6e6e6,#f4f4f4 40%,#f8f8f8)"></div>
<svg class="r" style="left:171px;top:120px;" width="9" height="6" viewBox="0 0 9 6"><path d="M0.500 5.500 L4.500 1 L8.500 5.500 Z" fill="#555"/></svg>
<svg class="r" style="left:171px;top:363px;" width="9" height="5" viewBox="0 0 9 5"><path d="M0.500 0.300 L4.500 4.700 L8.500 0.300 Z" fill="#6a6a6a"/></svg>
<div class="r" style="left:167px;top:132px;width:15px;height:27px;box-sizing:border-box;border:1px solid #9a9a9a;border-radius:2px;background:linear-gradient(90deg,#f6f6f6,#e2e2e2 50%,#cfcfcf)"></div>
<div class="r" style="left:171px;top:141px;width:8px;height:1px;background:#555;"></div>
<div class="r" style="left:171px;top:144px;width:8px;height:1px;background:#555;"></div>
<div class="r" style="left:171px;top:147px;width:8px;height:1px;background:#555;"></div>
<div class="r" style="left:4px;top:373px;width:180px;height:1px;background:#000;"></div>
<div class="r" style="left:6px;top:373px;width:65px;height:20px;box-sizing:border-box;background:#fff;border-left:1px solid #000;border-right:1px solid #000;border-bottom:1px solid #000;box-shadow:1px 1px 0 #6a6a6a"></div>
<span class="t" style="top:377px;font-size:12.5px;line-height:12.5px;color:#000;left:16.00px;transform:scaleX(0.9387);transform-origin:0 0;">Symbols</span>
<span class="t" style="top:377px;font-size:12.5px;line-height:12.5px;color:#7a7a7a;left:81.50px;transform:scaleX(0.9381);transform-origin:0 0;">Tick Chart</span>
<div class="r" style="left:145px;top:377px;width:1px;height:14px;background:#6a6a6a;"></div>
<div class="r" style="left:0px;top:398px;width:187px;height:1px;background:#b4b4b4;"></div>
<div class="r" style="left:0px;top:399px;width:187px;height:1px;background:#ffffff;"></div>
<div class="r" style="left:3px;top:401px;width:167px;height:13px;background:linear-gradient(90deg,#c3d3e8,#d9e4f2)"></div>
<span class="t" style="top:402px;font-size:11.5px;line-height:11.5px;color:#4d5766;left:5.50px;transform:scaleX(0.9346);transform-origin:0 0;">Navigator</span>
<svg class="r" style="left:174.5px;top:404.5px;" width="7" height="6" viewBox="0 0 7 6"><path d="M0.800 0.600 L6.200 5.400 M6.200 0.600 L0.800 5.400" stroke="#000" stroke-width="1.800"/></svg>
<div class="r" style="left:3px;top:415px;width:182px;height:1px;background:#a0a0a0;"></div>
<div class="r" style="left:3px;top:415px;width:1px;height:282px;background:#a0a0a0;"></div>
<div class="r" style="left:184px;top:415px;width:1px;height:282px;background:#fff;"></div>
<div class="r" style="left:185px;top:97px;width:1px;height:600px;background:#fbfbfb;"></div>
<div class="r" style="left:4px;top:416px;width:180px;height:259px;background:#ffffff;"></div>
<div class="r" style="left:17px;top:434px;width:1px;height:102px;background:repeating-linear-gradient(180deg,#8a8a8a 0 1px,transparent 1px 2px)"></div>
<div class="r" style="left:22px;top:445px;width:6px;height:1px;background:repeating-linear-gradient(90deg,#8a8a8a 0 1px,transparent 1px 2px)"></div>
<div class="r" style="left:22px;top:499px;width:6px;height:1px;background:repeating-linear-gradient(90deg,#8a8a8a 0 1px,transparent 1px 2px)"></div>
<div class="r" style="left:22px;top:517px;width:6px;height:1px;background:repeating-linear-gradient(90deg,#8a8a8a 0 1px,transparent 1px 2px)"></div>
<div class="r" style="left:22px;top:535px;width:6px;height:1px;background:repeating-linear-gradient(90deg,#8a8a8a 0 1px,transparent 1px 2px)"></div>
<div class="r" style="left:38px;top:452px;width:1px;height:7px;background:repeating-linear-gradient(180deg,#8a8a8a 0 1px,transparent 1px 2px)"></div>
<div class="r" style="left:43px;top:463px;width:6px;height:1px;background:repeating-linear-gradient(90deg,#8a8a8a 0 1px,transparent 1px 2px)"></div>
<div class="r" style="left:59px;top:470px;width:1px;height:11px;background:repeating-linear-gradient(180deg,#8a8a8a 0 1px,transparent 1px 2px)"></div>
<div class="r" style="left:59px;top:481px;width:11px;height:1px;background:repeating-linear-gradient(90deg,#8a8a8a 0 1px,transparent 1px 2px)"></div>
<svg class="r" style="left:13px;top:441px;" width="9" height="9" viewBox="0 0 9 9"><rect x="0.500" y="0.500" width="8" height="8" rx="1" fill="#fcfcfc" stroke="#919191"/><path d="M2 4.500 h5" stroke="#3a4a8a" stroke-width="1"/></svg>
<svg class="r" style="left:34px;top:459px;" width="9" height="9" viewBox="0 0 9 9"><rect x="0.500" y="0.500" width="8" height="8" rx="1" fill="#fcfcfc" stroke="#919191"/><path d="M2 4.500 h5" stroke="#3a4a8a" stroke-width="1"/></svg>
<svg class="r" style="left:13px;top:495px;" width="9" height="9" viewBox="0 0 9 9"><rect x="0.500" y="0.500" width="8" height="8" rx="1" fill="#fcfcfc" stroke="#919191"/><path d="M2 4.500 h5" stroke="#3a4a8a" stroke-width="1"/><path d="M4.500 2 v5" stroke="#3a4a8a" stroke-width="1"/></svg>
<svg class="r" style="left:13px;top:513px;" width="9" height="9" viewBox="0 0 9 9"><rect x="0.500" y="0.500" width="8" height="8" rx="1" fill="#fcfcfc" stroke="#919191"/><path d="M2 4.500 h5" stroke="#3a4a8a" stroke-width="1"/><path d="M4.500 2 v5" stroke="#3a4a8a" stroke-width="1"/></svg>
<svg class="r" style="left:13px;top:531px;" width="9" height="9" viewBox="0 0 9 9"><rect x="0.500" y="0.500" width="8" height="8" rx="1" fill="#fcfcfc" stroke="#919191"/><path d="M2 4.500 h5" stroke="#3a4a8a" stroke-width="1"/><path d="M4.500 2 v5" stroke="#3a4a8a" stroke-width="1"/></svg>
<svg class="r" style="left:10px;top:418px;" width="15" height="15" viewBox="0 0 15 15"><rect x="0.500" y="0.500" width="11" height="9" fill="#eef4fc" stroke="#4a86d8"/><path d="M2 4 h2 l1 -1.500 l1 2.500 l1 -1.500 h2" stroke="#3b7bd6" fill="none"/><rect x="3.500" y="5.500" width="11" height="9" fill="#f8fbff" stroke="#4a86d8"/><path d="M5 11 l1.500 -2 l1.500 3 l1.500 -3 l1.500 3 l1.500 -2" stroke="#3b7bd6" fill="none" stroke-width="1"/></svg>
<svg class="r" style="left:29px;top:434px;" width="18" height="17" viewBox="0 0 18 17"><circle cx="5" cy="4.500" r="3.300" fill="#f2c14e" stroke="#b98216"/><path d="M0.500 15.500 q0 -7 4.500 -7 q4.500 0 4.500 7 z" fill="#3cc03c" stroke="#1a7a1a"/><circle cx="11.500" cy="5" r="3.600" fill="#f6cf62" stroke="#b98216"/><path d="M6 16.500 q0 -8 5.500 -8 q5.500 0 5.500 8 z" fill="#f0c040" stroke="#b98216"/><path d="M9.500 9.500 l2 3 l2 -3" fill="#fff6d8" stroke="#b98216" stroke-width=".6"/></svg>
<svg class="r" style="left:52px;top:453px;" width="13" height="17" viewBox="0 0 13 17"><path d="M1.500 2.500 L8 0.500 L11.500 2 V14.500 L5 16.500 L1.500 14.500 Z" fill="#3f8fe0" stroke="#1d5fb0"/><path d="M5 4 L11.500 2 V14.500 L5 16.500 Z" fill="#9ccaf6" stroke="#1d5fb0" stroke-width=".7"/><path d="M6.500 5.500 l3.500 -1 M6.500 7.500 l3.500 -1" stroke="#1d5fb0" stroke-width=".9"/><circle cx="9" cy="12.500" r="1" fill="#f3c73c"/></svg>
<svg class="r" style="left:73px;top:471px;" width="14" height="16" viewBox="0 0 14 16"><circle cx="7" cy="4.500" r="3.600" fill="#f2c14e" stroke="#b98216"/><path d="M0.500 15.500 q0 -7.500 6.500 -7.500 q6.500 0 6.500 7.500 z" fill="#3cc03c" stroke="#1a7a1a"/><path d="M5 8.500 l2 3.500 l2 -3.500" fill="#e8ffe8" stroke="#1a7a1a" stroke-width=".6"/></svg>
<svg class="r" style="left:30px;top:489px;" width="15" height="15" viewBox="0 0 15 15"><rect x="0.500" y="0.500" width="14" height="14" rx="2.500" fill="#f5d35c" stroke="#c29a22"/><rect x="1.500" y="1.500" width="12" height="6" rx="2" fill="#fbe89a"/><path d="M9.500 3.500 q-2 -.8 -2.500 1.500 l-1 6 q-.4 1.500 -1.800 1 M5 6.500 h4.500" stroke="#8a6a10" stroke-width="1.200" fill="none"/></svg>
<svg class="r" style="left:29px;top:506px;" width="18" height="17" viewBox="0 0 18 17"><ellipse cx="8" cy="6.500" rx="7.500" ry="2.800" fill="#5d97d8" stroke="#2f69ad"/><path d="M3.500 5.500 q4.500 -8 9 0 z" fill="#7fb1e6" stroke="#2f69ad"/><path d="M4 9.500 q4 2.500 8 0 l-1 2.500 h-6 z" fill="#f6dc8a" stroke="#b78f1c" stroke-width=".8"/><path d="M12 10.500 l4 3 l-3 3 l-4 -3 z" fill="#f4d35a" stroke="#b78f1c"/></svg>
<svg class="r" style="left:30px;top:525px;" width="17" height="17" viewBox="0 0 17 17"><path d="M2.500 1.500 h9 q-1.500 1.500 0 3 v7 h-8 v-7 q-1.800 -1.500 -1 -3 z" fill="#fbe9a0" stroke="#c29a22"/><path d="M1.500 1.500 h10" stroke="#c29a22" stroke-width="1.600"/><path d="M5 5.500 h4 M5 7.500 h4" stroke="#c29a22" stroke-width=".8" stroke-dasharray="1 1"/><path d="M11.500 9.500 l3.500 3 l-3 3 l-3.500 -3 z" fill="#f4d35a" stroke="#b78f1c"/></svg>
<span class="t" style="top:420px;font-size:12.5px;line-height:12.5px;color:#000;left:31.00px;transform:scaleX(0.9760);transform-origin:0 0;">Tickmill MT4</span>
<span class="t" style="top:438px;font-size:12.5px;line-height:12.5px;color:#000;left:52.00px;transform:scaleX(0.9626);transform-origin:0 0;">Accounts</span>
<span class="t" style="top:456px;font-size:12.5px;line-height:12.5px;color:#000;left:73.00px;transform:scaleX(0.9732);transform-origin:0 0;">Tickmill-DemoUK</span>
<span class="t" style="top:492px;font-size:12.5px;line-height:12.5px;color:#000;left:51.50px;transform:scaleX(0.9594);transform-origin:0 0;">Indicators</span>
<span class="t" style="top:510px;font-size:12.5px;line-height:12.5px;color:#000;left:52.00px;transform:scaleX(0.9154);transform-origin:0 0;">Expert Advisors</span>
<span class="t" style="top:528px;font-size:12.5px;line-height:12.5px;color:#000;left:52.00px;transform:scaleX(0.9031);transform-origin:0 0;">Scripts</span>
<div class="r" style="left:94px;top:470px;width:89px;height:18px;overflow:hidden">
<span class="t" style="top:4px;font-size:12.5px;line-height:12.5px;color:#000;left:0.20px;transform:scaleX(0.8671);transform-origin:0 0;">2089514238: TYUI</span>
</div>
<div class="r" style="left:4px;top:675px;width:180px;height:1px;background:#000;"></div>
<div class="r" style="left:6px;top:675px;width:71px;height:20px;box-sizing:border-box;background:#fff;border-left:1px solid #000;border-right:1px solid #000;border-bottom:1px solid #000;box-shadow:1px 1px 0 #6a6a6a"></div>
<span class="t" style="top:679px;font-size:12.5px;line-height:12.5px;color:#000;left:16.70px;transform:scaleX(0.9858);transform-origin:0 0;">Common</span>
<span class="t" style="top:679px;font-size:12.5px;line-height:12.5px;color:#7a7a7a;left:87.20px;transform:scaleX(0.9104);transform-origin:0 0;">Favorites</span>
<div class="r" style="left:144px;top:679px;width:1px;height:14px;background:#6a6a6a;"></div>
<div class="r" style="left:189px;top:98px;width:1249px;height:581px;background:#000000;"></div>
<div class="r" style="left:189px;top:97px;width:1249px;height:1px;background:#6e6e6e;"></div>
<div class="r" style="left:1438px;top:97px;width:2px;height:583px;background:#ffffff;"></div>
<div class="r" style="left:189px;top:679px;width:1251px;height:2px;background:#fafafa;"></div>
<span class="t" style="top:222px;font-size:10px;line-height:10px;color:#ffffff;left:198.40px;transform:scaleX(0.9380);transform-origin:0 0;text-rendering:geometricPrecision;">#247327717 tp</span>
<span class="t" style="top:244px;font-size:10px;line-height:10px;color:#ffffff;left:198.40px;transform:scaleX(0.9394);transform-origin:0 0;text-rendering:geometricPrecision;">#247327717 buy 0.01</span>
<svg class="r" style="left:0;top:0" width="1440" height="700" viewBox="0 0 1440 700" shape-rendering="crispEdges"><rect x="192" y="282" width="1203" height="1" fill="#778899"/><path d="M192 231.500 H1395" stroke="#ff0000" stroke-width="1" stroke-dasharray="9 6 3 6" fill="none"/><path d="M192 253.500 H1395" stroke="#32cd32" stroke-width="1" stroke-dasharray="9 6 3 6" fill="none"/><path d="M408.5 100 V658" stroke="#ffffff" stroke-width="1" stroke-dasharray="3 3" fill="none"/><path d="M1176.5 100 V658" stroke="#ffffff" stroke-width="1" stroke-dasharray="3 3" fill="none"/><rect x="192" y="156" width="1" height="113" fill="#ff0000"/><rect x="192" y="210" width="3" height="37" fill="#ff0000"/><rect x="200" y="189" width="1" height="87" fill="#00ff00"/><rect x="198" y="223" width="5" height="23" fill="#00ff00"/><rect x="208" y="194" width="1" height="115" fill="#ff0000"/><rect x="206" y="220" width="5" height="69" fill="#ff0000"/><rect x="216" y="265" width="1" height="59" fill="#00ff00"/><rect x="214" y="285" width="5" height="4" fill="#00ff00"/><rect x="224" y="279" width="1" height="178" fill="#ff0000"/><rect x="222" y="285" width="5" height="132" fill="#ff0000"/><rect x="232" y="391" width="1" height="77" fill="#00ff00"/><rect x="230" y="403" width="5" height="12" fill="#00ff00"/><rect x="240" y="385" width="1" height="259" fill="#ff0000"/><rect x="238" y="402" width="5" height="196" fill="#ff0000"/><rect x="248" y="499" width="1" height="104" fill="#00ff00"/><rect x="246" y="553" width="5" height="45" fill="#00ff00"/><rect x="256" y="461" width="1" height="107" fill="#00ff00"/><rect x="254" y="484" width="5" height="71" fill="#00ff00"/><rect x="264" y="462" width="1" height="172" fill="#ff0000"/><rect x="262" y="484" width="5" height="96" fill="#ff0000"/><rect x="272" y="492" width="1" height="100" fill="#00ff00"/><rect x="270" y="510" width="5" height="70" fill="#00ff00"/><rect x="280" y="489" width="1" height="37" fill="#00ff00"/><rect x="278" y="492" width="5" height="19" fill="#00ff00"/><rect x="288" y="434" width="1" height="87" fill="#00ff00"/><rect x="286" y="470" width="5" height="22" fill="#00ff00"/><rect x="296" y="407" width="1" height="100" fill="#00ff00"/><rect x="294" y="425" width="5" height="47" fill="#00ff00"/><rect x="304" y="381" width="1" height="78" fill="#00ff00"/><rect x="302" y="382" width="5" height="44" fill="#00ff00"/><rect x="312" y="377" width="1" height="54" fill="#ff0000"/><rect x="310" y="381" width="5" height="24" fill="#ff0000"/><rect x="320" y="369" width="1" height="50" fill="#ff0000"/><rect x="318" y="402" width="5" height="11" fill="#ff0000"/><rect x="328" y="406" width="1" height="50" fill="#ff0000"/><rect x="326" y="411" width="5" height="10" fill="#ff0000"/><rect x="336" y="388" width="1" height="38" fill="#00ff00"/><rect x="334" y="391" width="5" height="30" fill="#00ff00"/><rect x="344" y="386" width="1" height="63" fill="#ff0000"/><rect x="342" y="388" width="5" height="8" fill="#ff0000"/><rect x="352" y="381" width="1" height="61" fill="#ff0000"/><rect x="350" y="397" width="5" height="37" fill="#ff0000"/><rect x="360" y="412" width="1" height="39" fill="#ff0000"/><rect x="358" y="434" width="5" height="3" fill="#ff0000"/><rect x="368" y="398" width="1" height="48" fill="#00ff00"/><rect x="366" y="398" width="5" height="39" fill="#00ff00"/><rect x="376" y="377" width="1" height="30" fill="#00ff00"/><rect x="374" y="384" width="5" height="15" fill="#00ff00"/><rect x="384" y="344" width="1" height="43" fill="#00ff00"/><rect x="382" y="347" width="5" height="38" fill="#00ff00"/><rect x="392" y="324" width="1" height="37" fill="#00ff00"/><rect x="390" y="333" width="5" height="16" fill="#00ff00"/><rect x="400" y="301" width="1" height="114" fill="#ff0000"/><rect x="398" y="339" width="5" height="48" fill="#ff0000"/><rect x="408" y="461" width="1" height="60" fill="#00ff00"/><rect x="406" y="474" width="5" height="32" fill="#00ff00"/><rect x="416" y="442" width="1" height="74" fill="#00ff00"/><rect x="414" y="453" width="5" height="22" fill="#00ff00"/><rect x="424" y="399" width="1" height="57" fill="#00ff00"/><rect x="422" y="408" width="5" height="46" fill="#00ff00"/><rect x="432" y="396" width="1" height="43" fill="#ff0000"/><rect x="430" y="406" width="5" height="23" fill="#ff0000"/><rect x="440" y="349" width="1" height="78" fill="#00ff00"/><rect x="438" y="364" width="5" height="61" fill="#00ff00"/><rect x="448" y="295" width="1" height="70" fill="#00ff00"/><rect x="446" y="302" width="5" height="63" fill="#00ff00"/><rect x="456" y="298" width="1" height="81" fill="#ff0000"/><rect x="454" y="302" width="5" height="72" fill="#ff0000"/><rect x="464" y="331" width="1" height="43" fill="#00ff00"/><rect x="462" y="370" width="5" height="4" fill="#00ff00"/><rect x="472" y="319" width="1" height="60" fill="#00ff00"/><rect x="470" y="333" width="5" height="39" fill="#00ff00"/><rect x="480" y="329" width="1" height="40" fill="#ff0000"/><rect x="478" y="334" width="5" height="15" fill="#ff0000"/><rect x="488" y="326" width="1" height="38" fill="#00ff00"/><rect x="486" y="327" width="5" height="22" fill="#00ff00"/><rect x="496" y="320" width="1" height="47" fill="#ff0000"/><rect x="494" y="327" width="5" height="17" fill="#ff0000"/><rect x="504" y="263" width="1" height="108" fill="#00ff00"/><rect x="502" y="286" width="5" height="58" fill="#00ff00"/><rect x="512" y="276" width="1" height="54" fill="#ff0000"/><rect x="510" y="285" width="5" height="32" fill="#ff0000"/><rect x="520" y="268" width="1" height="64" fill="#00ff00"/><rect x="518" y="314" width="5" height="4" fill="#00ff00"/><rect x="528" y="282" width="1" height="81" fill="#ff0000"/><rect x="526" y="315" width="5" height="34" fill="#ff0000"/><rect x="536" y="314" width="1" height="65" fill="#ff0000"/><rect x="534" y="349" width="5" height="3" fill="#ff0000"/><rect x="544" y="344" width="1" height="77" fill="#ff0000"/><rect x="542" y="349" width="5" height="60" fill="#ff0000"/><rect x="552" y="385" width="1" height="48" fill="#ff0000"/><rect x="550" y="408" width="5" height="9" fill="#ff0000"/><rect x="560" y="361" width="1" height="80" fill="#00ff00"/><rect x="558" y="367" width="5" height="50" fill="#00ff00"/><rect x="568" y="364" width="1" height="48" fill="#ff0000"/><rect x="566" y="368" width="5" height="36" fill="#ff0000"/><rect x="576" y="365" width="1" height="46" fill="#00ff00"/><rect x="574" y="373" width="5" height="29" fill="#00ff00"/><rect x="584" y="362" width="1" height="26" fill="#ff0000"/><rect x="582" y="374" width="5" height="3" fill="#ff0000"/><rect x="592" y="352" width="1" height="37" fill="#00ff00"/><rect x="590" y="361" width="5" height="18" fill="#00ff00"/><rect x="600" y="317" width="1" height="59" fill="#00ff00"/><rect x="598" y="330" width="5" height="32" fill="#00ff00"/><rect x="608" y="315" width="1" height="55" fill="#ff0000"/><rect x="606" y="331" width="5" height="32" fill="#ff0000"/><rect x="616" y="315" width="1" height="47" fill="#00ff00"/><rect x="614" y="321" width="5" height="40" fill="#00ff00"/><rect x="624" y="292" width="1" height="39" fill="#00ff00"/><rect x="622" y="297" width="5" height="24" fill="#00ff00"/><rect x="632" y="283" width="1" height="20" fill="#ff0000"/><rect x="630" y="297" width="5" height="2" fill="#ff0000"/><rect x="640" y="288" width="1" height="21" fill="#ff0000"/><rect x="638" y="299" width="5" height="7" fill="#ff0000"/><rect x="648" y="286" width="1" height="41" fill="#00ff00"/><rect x="646" y="290" width="5" height="16" fill="#00ff00"/><rect x="656" y="275" width="1" height="18" fill="#00ff00"/><rect x="654" y="285" width="5" height="6" fill="#00ff00"/><rect x="664" y="241" width="1" height="45" fill="#00ff00"/><rect x="662" y="276" width="5" height="10" fill="#00ff00"/><rect x="672" y="263" width="1" height="29" fill="#ff0000"/><rect x="670" y="275" width="5" height="17" fill="#ff0000"/><rect x="680" y="282" width="1" height="26" fill="#ff0000"/><rect x="678" y="292" width="5" height="3" fill="#ff0000"/><rect x="688" y="267" width="1" height="35" fill="#00ff00"/><rect x="686" y="286" width="5" height="8" fill="#00ff00"/><rect x="696" y="284" width="1" height="44" fill="#ff0000"/><rect x="694" y="286" width="5" height="31" fill="#ff0000"/><rect x="704" y="305" width="1" height="84" fill="#ff0000"/><rect x="702" y="316" width="5" height="58" fill="#ff0000"/><rect x="712" y="363" width="1" height="78" fill="#ff0000"/><rect x="710" y="373" width="5" height="12" fill="#ff0000"/><rect x="720" y="352" width="1" height="77" fill="#ff0000"/><rect x="718" y="384" width="5" height="17" fill="#ff0000"/><rect x="728" y="347" width="1" height="77" fill="#00ff00"/><rect x="726" y="351" width="5" height="50" fill="#00ff00"/><rect x="736" y="306" width="1" height="53" fill="#00ff00"/><rect x="734" y="334" width="5" height="14" fill="#00ff00"/><rect x="744" y="218" width="1" height="155" fill="#00ff00"/><rect x="742" y="238" width="5" height="95" fill="#00ff00"/><rect x="752" y="195" width="1" height="83" fill="#00ff00"/><rect x="750" y="228" width="5" height="11" fill="#00ff00"/><rect x="760" y="225" width="1" height="74" fill="#ff0000"/><rect x="758" y="230" width="5" height="66" fill="#ff0000"/><rect x="768" y="243" width="1" height="53" fill="#00ff00"/><rect x="766" y="264" width="5" height="32" fill="#00ff00"/><rect x="776" y="238" width="1" height="36" fill="#00ff00"/><rect x="774" y="246" width="5" height="20" fill="#00ff00"/><rect x="784" y="199" width="1" height="85" fill="#00ff00"/><rect x="782" y="199" width="5" height="48" fill="#00ff00"/><rect x="792" y="168" width="1" height="43" fill="#00ff00"/><rect x="790" y="190" width="5" height="11" fill="#00ff00"/><rect x="800" y="131" width="1" height="77" fill="#00ff00"/><rect x="798" y="152" width="5" height="38" fill="#00ff00"/><rect x="808" y="130" width="1" height="52" fill="#ff0000"/><rect x="806" y="152" width="5" height="29" fill="#ff0000"/><rect x="816" y="172" width="1" height="42" fill="#ff0000"/><rect x="814" y="180" width="5" height="24" fill="#ff0000"/><rect x="824" y="194" width="1" height="61" fill="#ff0000"/><rect x="822" y="204" width="5" height="41" fill="#ff0000"/><rect x="832" y="150" width="1" height="108" fill="#00ff00"/><rect x="830" y="189" width="5" height="55" fill="#00ff00"/><rect x="840" y="185" width="1" height="59" fill="#ff0000"/><rect x="838" y="189" width="5" height="51" fill="#ff0000"/><rect x="848" y="193" width="1" height="55" fill="#00ff00"/><rect x="846" y="197" width="5" height="42" fill="#00ff00"/><rect x="856" y="193" width="1" height="105" fill="#ff0000"/><rect x="854" y="196" width="5" height="85" fill="#ff0000"/><rect x="864" y="257" width="1" height="49" fill="#ff0000"/><rect x="862" y="279" width="5" height="15" fill="#ff0000"/><rect x="872" y="280" width="1" height="55" fill="#ff0000"/><rect x="870" y="293" width="5" height="37" fill="#ff0000"/><rect x="880" y="327" width="1" height="42" fill="#ff0000"/><rect x="878" y="328" width="5" height="40" fill="#ff0000"/><rect x="888" y="301" width="1" height="74" fill="#00ff00"/><rect x="886" y="327" width="5" height="40" fill="#00ff00"/><rect x="896" y="274" width="1" height="55" fill="#ff0000"/><rect x="894" y="327" width="5" height="2" fill="#ff0000"/><rect x="904" y="309" width="1" height="64" fill="#ff0000"/><rect x="902" y="329" width="5" height="10" fill="#ff0000"/><rect x="912" y="320" width="1" height="116" fill="#ff0000"/><rect x="910" y="337" width="5" height="85" fill="#ff0000"/><rect x="920" y="307" width="1" height="118" fill="#00ff00"/><rect x="918" y="367" width="5" height="55" fill="#00ff00"/><rect x="928" y="347" width="1" height="37" fill="#00ff00"/><rect x="926" y="360" width="5" height="8" fill="#00ff00"/><rect x="936" y="355" width="1" height="154" fill="#ff0000"/><rect x="934" y="360" width="5" height="102" fill="#ff0000"/><rect x="944" y="421" width="1" height="81" fill="#00ff00"/><rect x="942" y="423" width="5" height="38" fill="#00ff00"/><rect x="952" y="283" width="1" height="176" fill="#00ff00"/><rect x="950" y="302" width="5" height="123" fill="#00ff00"/><rect x="960" y="261" width="1" height="87" fill="#00ff00"/><rect x="958" y="272" width="5" height="32" fill="#00ff00"/><rect x="968" y="167" width="1" height="119" fill="#00ff00"/><rect x="966" y="262" width="5" height="10" fill="#00ff00"/><rect x="976" y="235" width="1" height="62" fill="#ff0000"/><rect x="974" y="262" width="5" height="4" fill="#ff0000"/><rect x="984" y="226" width="1" height="77" fill="#ff0000"/><rect x="982" y="265" width="5" height="35" fill="#ff0000"/><rect x="992" y="292" width="1" height="88" fill="#ff0000"/><rect x="990" y="298" width="5" height="40" fill="#ff0000"/><rect x="1000" y="245" width="1" height="99" fill="#00ff00"/><rect x="998" y="256" width="5" height="82" fill="#00ff00"/><rect x="1008" y="216" width="1" height="43" fill="#00ff00"/><rect x="1006" y="225" width="5" height="30" fill="#00ff00"/><rect x="1016" y="198" width="1" height="49" fill="#ff0000"/><rect x="1014" y="226" width="5" height="11" fill="#ff0000"/><rect x="1024" y="235" width="1" height="33" fill="#ff0000"/><rect x="1022" y="235" width="5" height="27" fill="#ff0000"/><rect x="1032" y="157" width="1" height="110" fill="#00ff00"/><rect x="1030" y="166" width="5" height="96" fill="#00ff00"/><rect x="1040" y="154" width="1" height="77" fill="#ff0000"/><rect x="1038" y="166" width="5" height="64" fill="#ff0000"/><rect x="1048" y="181" width="1" height="51" fill="#00ff00"/><rect x="1046" y="222" width="5" height="5" fill="#00ff00"/><rect x="1056" y="213" width="1" height="25" fill="#00ff00"/><rect x="1054" y="217" width="5" height="6" fill="#00ff00"/><rect x="1064" y="183" width="1" height="39" fill="#ff0000"/><rect x="1062" y="216" width="5" height="6" fill="#ff0000"/><rect x="1072" y="214" width="1" height="80" fill="#ff0000"/><rect x="1070" y="221" width="5" height="44" fill="#ff0000"/><rect x="1080" y="230" width="1" height="57" fill="#ff0000"/><rect x="1078" y="262" width="5" height="2" fill="#ff0000"/><rect x="1088" y="259" width="1" height="32" fill="#ff0000"/><rect x="1086" y="263" width="5" height="28" fill="#ff0000"/><rect x="1096" y="240" width="1" height="55" fill="#00ff00"/><rect x="1094" y="250" width="5" height="43" fill="#00ff00"/><rect x="1104" y="238" width="1" height="30" fill="#00ff00"/><rect x="1102" y="244" width="5" height="7" fill="#00ff00"/><rect x="1112" y="244" width="1" height="29" fill="#ff0000"/><rect x="1110" y="244" width="5" height="20" fill="#ff0000"/><rect x="1120" y="260" width="1" height="38" fill="#ff0000"/><rect x="1118" y="263" width="5" height="8" fill="#ff0000"/><rect x="1128" y="248" width="1" height="55" fill="#ff0000"/><rect x="1126" y="269" width="5" height="29" fill="#ff0000"/><rect x="1136" y="280" width="1" height="23" fill="#00ff00"/><rect x="1134" y="282" width="5" height="16" fill="#00ff00"/><path d="M191.500 100 V658.500 H1395.500 V100.500 H191" stroke="#ffffff" stroke-width="1" fill="none"/><rect x="1396" y="110" width="2" height="1" fill="#fff"/><rect x="1396" y="144" width="2" height="1" fill="#fff"/><rect x="1396" y="178" width="2" height="1" fill="#fff"/><rect x="1396" y="212" width="2" height="1" fill="#fff"/><rect x="1396" y="246" width="2" height="1" fill="#fff"/><rect x="1396" y="280" width="2" height="1" fill="#fff"/><rect x="1396" y="314" width="2" height="1" fill="#fff"/><rect x="1396" y="348" width="2" height="1" fill="#fff"/><rect x="1396" y="382" width="2" height="1" fill="#fff"/><rect x="1396" y="417" width="2" height="1" fill="#fff"/><rect x="1396" y="451" width="2" height="1" fill="#fff"/><rect x="1396" y="485" width="2" height="1" fill="#fff"/><rect x="1396" y="519" width="2" height="1" fill="#fff"/><rect x="1396" y="553" width="2" height="1" fill="#fff"/><rect x="1396" y="587" width="2" height="1" fill="#fff"/><rect x="1396" y="621" width="2" height="1" fill="#fff"/><rect x="1396" y="655" width="2" height="1" fill="#fff"/><rect x="192" y="659" width="1" height="3" fill="#fff"/><rect x="256" y="659" width="1" height="3" fill="#fff"/><rect x="320" y="659" width="1" height="3" fill="#fff"/><rect x="384" y="659" width="1" height="3" fill="#fff"/><rect x="448" y="659" width="1" height="3" fill="#fff"/><rect x="512" y="659" width="1" height="3" fill="#fff"/><rect x="576" y="659" width="1" height="3" fill="#fff"/><rect x="640" y="659" width="1" height="3" fill="#fff"/><rect x="704" y="659" width="1" height="3" fill="#fff"/><rect x="768" y="659" width="1" height="3" fill="#fff"/><rect x="832" y="659" width="1" height="3" fill="#fff"/><rect x="896" y="659" width="1" height="3" fill="#fff"/><rect x="960" y="659" width="1" height="3" fill="#fff"/><rect x="1024" y="659" width="1" height="3" fill="#fff"/><path d="M1147.500 101 h10 l-5 5.500 z" fill="#778899" shape-rendering="auto"/><path d="M195 107 h8 l-4 4 z" fill="#fff"/></svg>
<span class="t" style="top:107px;font-size:10px;line-height:10px;color:#ffffff;left:1401.50px;transform:scaleX(0.8989);transform-origin:0 0;text-rendering:geometricPrecision;">1.62795</span>
<span class="t" style="top:141px;font-size:10px;line-height:10px;color:#ffffff;left:1401.50px;transform:scaleX(0.8989);transform-origin:0 0;text-rendering:geometricPrecision;">1.62735</span>
<span class="t" style="top:175px;font-size:10px;line-height:10px;color:#ffffff;left:1401.50px;transform:scaleX(0.8989);transform-origin:0 0;text-rendering:geometricPrecision;">1.62675</span>
<span class="t" style="top:209px;font-size:10px;line-height:10px;color:#ffffff;left:1401.50px;transform:scaleX(0.8989);transform-origin:0 0;text-rendering:geometricPrecision;">1.62615</span>
<span class="t" style="top:243px;font-size:10px;line-height:10px;color:#ffffff;left:1401.50px;transform:scaleX(0.8989);transform-origin:0 0;text-rendering:geometricPrecision;">1.62555</span>
<span class="t" style="top:311px;font-size:10px;line-height:10px;color:#ffffff;left:1401.50px;transform:scaleX(0.8989);transform-origin:0 0;text-rendering:geometricPrecision;">1.62435</span>
<span class="t" style="top:345px;font-size:10px;line-height:10px;color:#ffffff;left:1401.50px;transform:scaleX(0.8989);transform-origin:0 0;text-rendering:geometricPrecision;">1.62375</span>
<span class="t" style="top:379px;font-size:10px;line-height:10px;color:#ffffff;left:1401.50px;transform:scaleX(0.8989);transform-origin:0 0;text-rendering:geometricPrecision;">1.62315</span>
<span class="t" style="top:414px;font-size:10px;line-height:10px;color:#ffffff;left:1401.50px;transform:scaleX(0.8989);transform-origin:0 0;text-rendering:geometricPrecision;">1.62255</span>
<span class="t" style="top:448px;font-size:10px;line-height:10px;color:#ffffff;left:1401.50px;transform:scaleX(0.8989);transform-origin:0 0;text-rendering:geometricPrecision;">1.62195</span>
<span class="t" style="top:482px;font-size:10px;line-height:10px;color:#ffffff;left:1401.50px;transform:scaleX(0.8989);transform-origin:0 0;text-rendering:geometricPrecision;">1.62135</span>
<span class="t" style="top:516px;font-size:10px;line-height:10px;color:#ffffff;left:1401.50px;transform:scaleX(0.8989);transform-origin:0 0;text-rendering:geometricPrecision;">1.62075</span>
<span class="t" style="top:550px;font-size:10px;line-height:10px;color:#ffffff;left:1401.50px;transform:scaleX(0.8989);transform-origin:0 0;text-rendering:geometricPrecision;">1.62015</span>
<span class="t" style="top:584px;font-size:10px;line-height:10px;color:#ffffff;left:1401.50px;transform:scaleX(0.8989);transform-origin:0 0;text-rendering:geometricPrecision;">1.61955</span>
<span class="t" style="top:618px;font-size:10px;line-height:10px;color:#ffffff;left:1401.50px;transform:scaleX(0.8989);transform-origin:0 0;text-rendering:geometricPrecision;">1.61895</span>
<span class="t" style="top:652px;font-size:10px;line-height:10px;color:#ffffff;left:1401.50px;transform:scaleX(0.8989);transform-origin:0 0;text-rendering:geometricPrecision;">1.61835</span>
<div class="r" style="left:1397px;top:277px;width:41px;height:11px;background:#ffffff;"></div>
<div class="r" style="left:1396px;top:280px;width:1px;height:1px;background:#ffffff;"></div>
<span class="t" style="top:279px;font-size:10px;line-height:10px;color:#000;left:1401.50px;transform:scaleX(0.8989);transform-origin:0 0;text-rendering:geometricPrecision;">1.62492</span>
<span class="t" style="top:664px;font-size:10px;line-height:10px;color:#ffffff;left:191.70px;transform:scaleX(0.9168);transform-origin:0 0;text-rendering:geometricPrecision;">18 Aug 2017</span>
<span class="t" style="top:664px;font-size:10px;line-height:10px;color:#ffffff;left:255.70px;transform:scaleX(0.9329);transform-origin:0 0;text-rendering:geometricPrecision;">18 Aug 19:15</span>
<span class="t" style="top:664px;font-size:10px;line-height:10px;color:#ffffff;left:319.70px;transform:scaleX(0.9329);transform-origin:0 0;text-rendering:geometricPrecision;">18 Aug 21:15</span>
<span class="t" style="top:664px;font-size:10px;line-height:10px;color:#ffffff;left:383.70px;transform:scaleX(0.9329);transform-origin:0 0;text-rendering:geometricPrecision;">18 Aug 23:15</span>
<span class="t" style="top:664px;font-size:10px;line-height:10px;color:#ffffff;left:447.70px;transform:scaleX(0.9329);transform-origin:0 0;text-rendering:geometricPrecision;">21 Aug 01:15</span>
<span class="t" style="top:664px;font-size:10px;line-height:10px;color:#ffffff;left:511.70px;transform:scaleX(0.9329);transform-origin:0 0;text-rendering:geometricPrecision;">21 Aug 03:15</span>
<span class="t" style="top:664px;font-size:10px;line-height:10px;color:#ffffff;left:575.70px;transform:scaleX(0.9329);transform-origin:0 0;text-rendering:geometricPrecision;">21 Aug 05:15</span>
<span class="t" style="top:664px;font-size:10px;line-height:10px;color:#ffffff;left:639.70px;transform:scaleX(0.9329);transform-origin:0 0;text-rendering:geometricPrecision;">21 Aug 07:15</span>
<span class="t" style="top:664px;font-size:10px;line-height:10px;color:#ffffff;left:703.70px;transform:scaleX(0.9329);transform-origin:0 0;text-rendering:geometricPrecision;">21 Aug 09:15</span>
<span class="t" style="top:664px;font-size:10px;line-height:10px;color:#ffffff;left:767.70px;transform:scaleX(0.9450);transform-origin:0 0;text-rendering:geometricPrecision;">21 Aug 11:15</span>
<span class="t" style="top:664px;font-size:10px;line-height:10px;color:#ffffff;left:831.70px;transform:scaleX(0.9329);transform-origin:0 0;text-rendering:geometricPrecision;">21 Aug 13:15</span>
<span class="t" style="top:664px;font-size:10px;line-height:10px;color:#ffffff;left:895.70px;transform:scaleX(0.9329);transform-origin:0 0;text-rendering:geometricPrecision;">21 Aug 15:15</span>
<span class="t" style="top:664px;font-size:10px;line-height:10px;color:#ffffff;left:959.70px;transform:scaleX(0.9329);transform-origin:0 0;text-rendering:geometricPrecision;">21 Aug 17:15</span>
<span class="t" style="top:664px;font-size:10px;line-height:10px;color:#ffffff;left:1023.70px;transform:scaleX(0.9329);transform-origin:0 0;text-rendering:geometricPrecision;">21 Aug 19:15</span>
<span class="t" style="top:664px;font-size:10px;line-height:10px;color:#ffffff;left:1087.70px;transform:scaleX(0.9329);transform-origin:0 0;text-rendering:geometricPrecision;">21 Aug 21:15</span>
<span class="t" style="top:105px;font-size:10px;line-height:10px;color:#ffffff;left:207.20px;transform:scaleX(0.9352);transform-origin:0 0;text-rendering:geometricPrecision;">GBPAUD,M15  1.62465 1.62495 1.62456 1.62492</span>
<span class="t" style="top:118px;font-size:10px;line-height:10px;color:#ffffff;left:196.00px;transform:scaleX(0.8994);transform-origin:0 0;text-rendering:geometricPrecision;">SuplexBar_anid-EA</span>
<span class="t" style="top:130px;font-size:10px;line-height:10px;color:#ffffff;left:196.00px;transform:scaleX(0.9725);transform-origin:0 0;text-rendering:geometricPrecision;">Idea by anid</span>
<span class="t" style="top:142px;font-size:10px;line-height:10px;color:#ffffff;left:196.00px;transform:scaleX(0.9345);transform-origin:0 0;text-rendering:geometricPrecision;">Programmed by Kira-h</span>
<span class="t" style="top:154px;font-size:10px;line-height:10px;color:#ffffff;left:196.00px;transform:scaleX(0.9028);transform-origin:0 0;text-rendering:geometricPrecision;">hassan.mb@hotmail.com</span>
<span class="t" style="top:166px;font-size:10px;line-height:10px;color:#ffffff;left:196.00px;transform:scaleX(0.9317);transform-origin:0 0;text-rendering:geometricPrecision;">forexprog.com/vb/showthread.php?t=32455</span>
<span class="t" style="top:178px;font-size:10px;line-height:10px;color:#ffffff;left:196.00px;transform:scaleX(0.8861);transform-origin:0 0;text-rendering:geometricPrecision;">Copyright © 2017</span>
<span class="t" style="top:189px;font-size:10px;line-height:10px;color:#ffffff;left:196.50px;transform:scaleX(1.0021);transform-origin:0 0;text-rendering:geometricPrecision;">-------------------------------------------</span>
<span class="t" style="top:106px;font-size:10px;line-height:10px;color:#ffffff;left:1273.00px;transform:scaleX(0.9003);transform-origin:0 0;text-rendering:geometricPrecision;">SuplexBar_anid-EA v5 (1)</span>
<svg class="r" style="left:1379px;top:105px;" width="12" height="12" viewBox="0 0 12 12"><circle cx="5.500" cy="5.500" r="4.800" fill="none" stroke="#fff" stroke-width="1"/><circle cx="3.800" cy="4" r=".8" fill="#fff"/><circle cx="7.200" cy="4" r=".8" fill="#fff"/><path d="M3 6.500 q2.500 2.500 5 0" stroke="#fff" fill="none" stroke-width="1"/></svg>
<div class="r" style="left:187px;top:681px;width:1090px;height:1px;background:#000;"></div>
<div class="r" style="left:1373px;top:681px;width:65px;height:1px;background:#000;"></div>
<div class="r" style="left:189px;top:682px;width:1px;height:18px;background:#fbfbfb;"></div>
<span class="t" style="top:685px;font-size:12.5px;line-height:12.5px;color:#6e6e6e;left:204.00px;transform:scaleX(0.8742);transform-origin:0 0;">USDJPY,M15</span>
<span class="t" style="top:685px;font-size:12.5px;line-height:12.5px;color:#6e6e6e;left:292.00px;transform:scaleX(0.8742);transform-origin:0 0;">USDJPY,M15</span>
<span class="t" style="top:685px;font-size:12.5px;line-height:12.5px;color:#6e6e6e;left:380.00px;transform:scaleX(0.8742);transform-origin:0 0;">USDJPY,M15</span>
<span class="t" style="top:685px;font-size:12.5px;line-height:12.5px;color:#6e6e6e;left:468.00px;transform:scaleX(0.8742);transform-origin:0 0;">USDJPY,M15</span>
<span class="t" style="top:685px;font-size:12.5px;line-height:12.5px;color:#6e6e6e;left:556.00px;transform:scaleX(0.8742);transform-origin:0 0;">USDJPY,M15</span>
<span class="t" style="top:685px;font-size:12.5px;line-height:12.5px;color:#6e6e6e;left:644.00px;transform:scaleX(0.8742);transform-origin:0 0;">USDJPY,M15</span>
<span class="t" style="top:685px;font-size:12.5px;line-height:12.5px;color:#6e6e6e;left:733.50px;transform:scaleX(0.8873);transform-origin:0 0;">AUDUSD,M15</span>
<span class="t" style="top:685px;font-size:12.5px;line-height:12.5px;color:#6e6e6e;left:828.50px;transform:scaleX(0.8439);transform-origin:0 0;">EURUSD,M15</span>
<span class="t" style="top:685px;font-size:12.5px;line-height:12.5px;color:#6e6e6e;left:920.00px;transform:scaleX(0.8609);transform-origin:0 0;">USDJPY,M15</span>
<span class="t" style="top:685px;font-size:12.5px;line-height:12.5px;color:#6e6e6e;left:1008.50px;transform:scaleX(0.8561);transform-origin:0 0;">GBPUSD,M15</span>
<span class="t" style="top:685px;font-size:12.5px;line-height:12.5px;color:#6e6e6e;left:1101.50px;transform:scaleX(0.8811);transform-origin:0 0;">USDCAD,M15</span>
<span class="t" style="top:685px;font-size:12.5px;line-height:12.5px;color:#6e6e6e;left:1195.00px;transform:scaleX(0.8981);transform-origin:0 0;">USDCHF,M15</span>
<div class="r" style="left:281px;top:685px;width:1px;height:14px;background:#6a6a6a;"></div>
<div class="r" style="left:369px;top:685px;width:1px;height:14px;background:#6a6a6a;"></div>
<div class="r" style="left:457px;top:685px;width:1px;height:14px;background:#6a6a6a;"></div>
<div class="r" style="left:545px;top:685px;width:1px;height:14px;background:#6a6a6a;"></div>
<div class="r" style="left:633px;top:685px;width:1px;height:14px;background:#6a6a6a;"></div>
<div class="r" style="left:721px;top:685px;width:1px;height:14px;background:#6a6a6a;"></div>
<div class="r" style="left:817px;top:685px;width:1px;height:14px;background:#6a6a6a;"></div>
<div class="r" style="left:910px;top:685px;width:1px;height:14px;background:#6a6a6a;"></div>
<div class="r" style="left:996px;top:685px;width:1px;height:14px;background:#6a6a6a;"></div>
<div class="r" style="left:1090px;top:685px;width:1px;height:14px;background:#6a6a6a;"></div>
<div class="r" style="left:1185px;top:685px;width:1px;height:14px;background:#6a6a6a;"></div>
<div class="r" style="left:1277px;top:681px;width:97px;height:20px;box-sizing:border-box;background:#fff;border-left:1px solid #000;border-right:1px solid #000;border-bottom:1px solid #000;box-shadow:1px 1px 0 #6a6a6a"></div>
<span class="t" style="top:685px;font-size:12.5px;line-height:12.5px;color:#000;left:1289.50px;transform:scaleX(0.8913);transform-origin:0 0;">GBPAUD,M15</span>
<svg class="r" style="left:1407px;top:686px;" width="5" height="9" viewBox="0 0 5 9"><path d="M4.500 0.500 V8.500 L0.500 4.500 Z" fill="#000"/></svg>
<svg class="r" style="left:1426px;top:686px;" width="5" height="9" viewBox="0 0 5 9"><path d="M0.500 0.500 V8.500 L4.500 4.500 Z" fill="#9a9a9a"/></svg>
<div class="r" style="left:0px;top:701px;width:1440px;height:2px;background:#f0f0f0;"></div>
<div class="r" style="left:0px;top:703px;width:1440px;height:132px;background:#f0f0f0;"></div>
<svg class="r" style="left:3.5px;top:708px;" width="7" height="6" viewBox="0 0 7 6"><path d="M0.800 0.600 L6.200 5.400 M6.200 0.600 L0.800 5.400" stroke="#000" stroke-width="1.800"/></svg>
<div class="r" style="left:1px;top:719px;width:13px;height:116px;background:linear-gradient(180deg,#d9e4f2,#c3d3e8)"></div>
<span class="t" style="left:-12.500px;top:805.500px;width:40px;font-size:11.5px;line-height:12px;color:#4d5766;transform:rotate(-90deg);transform-origin:center;text-align:left;letter-spacing:0">Terminal</span>
<div class="r" style="left:15px;top:705px;width:1421px;height:1px;background:#a0a0a0;"></div>
<div class="r" style="left:15px;top:705px;width:1px;height:129px;background:#a0a0a0;"></div>
<div class="r" style="left:16px;top:706px;width:1403px;height:105px;background:#ffffff;"></div>
<div class="r" style="left:16px;top:706px;width:1403px;height:22px;background:linear-gradient(180deg,#ffffff 0,#ffffff 9px,#f1f2f5 9px,#f1f2f5 100%)"></div>
<div class="r" style="left:16px;top:728px;width:1403px;height:1px;background:#d5d5d5;"></div>
<div class="r" style="left:16px;top:729px;width:1403px;height:1px;background:#efefef;"></div>
<div class="r" style="left:153px;top:707px;width:1px;height:20px;background:#e2e2e2;"></div>
<div class="r" style="left:345px;top:707px;width:1px;height:20px;background:#e2e2e2;"></div>
<div class="r" style="left:442px;top:707px;width:1px;height:20px;background:#e2e2e2;"></div>
<div class="r" style="left:515px;top:707px;width:1px;height:20px;background:#e2e2e2;"></div>
<div class="r" style="left:612px;top:707px;width:1px;height:20px;background:#e2e2e2;"></div>
<div class="r" style="left:718px;top:707px;width:1px;height:20px;background:#e2e2e2;"></div>
<div class="r" style="left:825px;top:707px;width:1px;height:20px;background:#e2e2e2;"></div>
<div class="r" style="left:932px;top:707px;width:1px;height:20px;background:#e2e2e2;"></div>
<div class="r" style="left:1040px;top:707px;width:1px;height:20px;background:#e2e2e2;"></div>
<div class="r" style="left:1146px;top:707px;width:1px;height:20px;background:#e2e2e2;"></div>
<div class="r" style="left:1254px;top:707px;width:1px;height:20px;background:#e2e2e2;"></div>
<div class="r" style="left:16px;top:730px;width:1403px;height:1px;background:#c4c4c4;"></div>
<div class="r" style="left:16px;top:731px;width:1403px;height:19px;background:#ffffff;"></div>
<div class="r" style="left:16px;top:750px;width:1403px;height:1px;background:#c4c4c4;"></div>
<div class="r" style="left:16px;top:751px;width:1403px;height:19px;background:#ebebeb;"></div>
<div class="r" style="left:16px;top:770px;width:1403px;height:1px;background:#c4c4c4;"></div>
<div class="r" style="left:16px;top:771px;width:1403px;height:19px;background:#ffffff;"></div>
<div class="r" style="left:16px;top:790px;width:1403px;height:1px;background:#c4c4c4;"></div>
<div class="r" style="left:16px;top:791px;width:1403px;height:19px;background:#ebebeb;"></div>
<div class="r" style="left:153px;top:730px;width:1px;height:81px;background:#c4c4c4;"></div>
<div class="r" style="left:345px;top:730px;width:1px;height:81px;background:#c4c4c4;"></div>
<div class="r" style="left:442px;top:730px;width:1px;height:81px;background:#c4c4c4;"></div>
<div class="r" style="left:515px;top:730px;width:1px;height:81px;background:#c4c4c4;"></div>
<div class="r" style="left:612px;top:730px;width:1px;height:81px;background:#c4c4c4;"></div>
<div class="r" style="left:718px;top:730px;width:1px;height:81px;background:#c4c4c4;"></div>
<div class="r" style="left:825px;top:730px;width:1px;height:81px;background:#c4c4c4;"></div>
<div class="r" style="left:932px;top:730px;width:1px;height:81px;background:#c4c4c4;"></div>
<div class="r" style="left:1040px;top:730px;width:1px;height:81px;background:#c4c4c4;"></div>
<div class="r" style="left:1146px;top:730px;width:1px;height:81px;background:#c4c4c4;"></div>
<div class="r" style="left:1254px;top:730px;width:1px;height:81px;background:#c4c4c4;"></div>
<span class="t" style="top:712px;font-size:12.5px;line-height:12.5px;color:#000;left:22.00px;transform:scaleX(0.9389);transform-origin:0 0;">Order</span>
<svg class="r" style="left:63px;top:714px;" width="8" height="8" viewBox="0 0 8 8"><path d="M1 7.500 L4 0.500" stroke="#8a8a8a" stroke-width="1"/><path d="M4 0.500 L7 7.500 H1" stroke="#e4e4e4" stroke-width="1" fill="none"/></svg>
<span class="t" style="top:712px;font-size:12.5px;line-height:12.5px;color:#000;left:317.00px;transform:scaleX(0.8782);transform-origin:0 0;">Time</span>
<span class="t" style="top:712px;font-size:12.5px;line-height:12.5px;color:#000;left:412.50px;transform:scaleX(0.9591);transform-origin:0 0;">Type</span>
<span class="t" style="top:712px;font-size:12.5px;line-height:12.5px;color:#000;left:490.00px;transform:scaleX(0.8632);transform-origin:0 0;">Size</span>
<span class="t" style="top:712px;font-size:12.5px;line-height:12.5px;color:#000;left:567.00px;transform:scaleX(0.9715);transform-origin:0 0;">Symbol</span>
<span class="t" style="top:712px;font-size:12.5px;line-height:12.5px;color:#000;left:688.50px;transform:scaleX(0.8952);transform-origin:0 0;">Price</span>
<span class="t" style="top:712px;font-size:12.5px;line-height:12.5px;color:#000;left:798.50px;transform:scaleX(0.8943);transform-origin:0 0;">S / L</span>
<span class="t" style="top:712px;font-size:12.5px;line-height:12.5px;color:#000;left:903.00px;transform:scaleX(0.9552);transform-origin:0 0;">T / P</span>
<span class="t" style="top:712px;font-size:12.5px;line-height:12.5px;color:#000;left:1010.50px;transform:scaleX(0.8952);transform-origin:0 0;">Price</span>
<span class="t" style="top:712px;font-size:12.5px;line-height:12.5px;color:#000;left:1075.50px;transform:scaleX(0.9671);transform-origin:0 0;">Commission</span>
<span class="t" style="top:712px;font-size:12.5px;line-height:12.5px;color:#000;left:1221.50px;transform:scaleX(0.8791);transform-origin:0 0;">Swap</span>
<span class="t" style="top:712px;font-size:12.5px;line-height:12.5px;color:#000;left:1384.00px;transform:scaleX(0.9936);transform-origin:0 0;">Profit</span>
<div class="r" style="left:827px;top:731px;width:104px;height:18px;background:#60f060;"></div>
<svg class="r" style="left:19px;top:733px;" width="15" height="16" viewBox="0 0 15 16"><defs><linearGradient id="dg0" x1="0" y1="0" x2="1" y2="1"><stop offset="0" stop-color="#ffffff"/><stop offset="1" stop-color="#dcdcdc"/></linearGradient></defs><path d="M2 1.500 h5.500 l3 3 v8.500 q0 .5 -.5 .5 h-8 q-.5 0 -.5 -.5 v-11 q0 -.5 .5 -.5 z" fill="url(#dg0)" stroke="#666" stroke-width="1"/><path d="M7.500 1.500 v3 h3" fill="none" stroke="#666"/><circle cx="10.300" cy="11.800" r="3.100" fill="#e8481c" stroke="#a82a08" stroke-width=".6"/></svg>
<span class="t" style="top:734px;font-size:12.5px;line-height:12.5px;color:#000;left:38.00px;transform:scaleX(0.8517);transform-origin:0 0;">247327558</span>
<span class="t" style="top:734px;font-size:12.5px;line-height:12.5px;color:#000;left:243.50px;transform:scaleX(0.8675);transform-origin:0 0;">2017.08.21 22:44:24</span>
<span class="t" style="top:734px;font-size:12.5px;line-height:12.5px;color:#000;left:422.50px;transform:scaleX(0.8793);transform-origin:0 0;">sell</span>
<span class="t" style="top:734px;font-size:12.5px;line-height:12.5px;color:#000;left:491.00px;transform:scaleX(0.8626);transform-origin:0 0;">0.01</span>
<span class="t" style="top:734px;font-size:12.5px;line-height:12.5px;color:#000;left:573.50px;transform:scaleX(0.9285);transform-origin:0 0;">eurusd</span>
<span class="t" style="top:734px;font-size:12.5px;line-height:12.5px;color:#000;left:676.00px;transform:scaleX(0.8741);transform-origin:0 0;">1.18080</span>
<span class="t" style="top:734px;font-size:12.5px;line-height:12.5px;color:#000;left:783.50px;transform:scaleX(0.8520);transform-origin:0 0;">0.00000</span>
<span class="t" style="top:734px;font-size:12.5px;line-height:12.5px;color:#000;left:890.00px;transform:scaleX(0.8741);transform-origin:0 0;">1.18058</span>
<span class="t" style="top:734px;font-size:12.5px;line-height:12.5px;color:#000;left:997.50px;transform:scaleX(0.8631);transform-origin:0 0;">1.18083</span>
<span class="t" style="top:734px;font-size:12.5px;line-height:12.5px;color:#000;left:1118.50px;transform:scaleX(0.8947);transform-origin:0 0;">-0.05</span>
<span class="t" style="top:734px;font-size:12.5px;line-height:12.5px;color:#000;left:1230.00px;transform:scaleX(0.8421);transform-origin:0 0;">0.00</span>
<span class="t" style="top:734px;font-size:12.5px;line-height:12.5px;color:#000;left:1370.00px;transform:scaleX(0.8772);transform-origin:0 0;">-0.03</span>
<svg class="r" style="left:1405px;top:737.5px;" width="7" height="6" viewBox="0 0 7 6"><path d="M0.700 0.500 L6.300 5.500 M6.300 0.500 L0.700 5.500" stroke="#808080" stroke-width="1.700"/></svg>
<div class="r" style="left:827px;top:751px;width:104px;height:18px;background:#60f060;"></div>
<svg class="r" style="left:19px;top:753px;" width="15" height="16" viewBox="0 0 15 16"><defs><linearGradient id="dg1" x1="0" y1="0" x2="1" y2="1"><stop offset="0" stop-color="#ffffff"/><stop offset="1" stop-color="#dcdcdc"/></linearGradient></defs><path d="M2 1.500 h5.500 l3 3 v8.500 q0 .5 -.5 .5 h-8 q-.5 0 -.5 -.5 v-11 q0 -.5 .5 -.5 z" fill="url(#dg1)" stroke="#666" stroke-width="1"/><path d="M7.500 1.500 v3 h3" fill="none" stroke="#666"/><circle cx="10.300" cy="11.800" r="3.100" fill="#2a8fe8" stroke="#1a5fb0" stroke-width=".6"/></svg>
<span class="t" style="top:754px;font-size:12.5px;line-height:12.5px;color:#000;left:38.00px;transform:scaleX(0.8517);transform-origin:0 0;">247327559</span>
<span class="t" style="top:754px;font-size:12.5px;line-height:12.5px;color:#000;left:243.50px;transform:scaleX(0.8675);transform-origin:0 0;">2017.08.21 22:32:56</span>
<span class="t" style="top:754px;font-size:12.5px;line-height:12.5px;color:#000;left:419.00px;transform:scaleX(0.9922);transform-origin:0 0;">buy</span>
<span class="t" style="top:754px;font-size:12.5px;line-height:12.5px;color:#000;left:491.00px;transform:scaleX(0.8626);transform-origin:0 0;">0.01</span>
<span class="t" style="top:754px;font-size:12.5px;line-height:12.5px;color:#000;left:569.00px;transform:scaleX(0.9752);transform-origin:0 0;">gbpusd</span>
<span class="t" style="top:754px;font-size:12.5px;line-height:12.5px;color:#000;left:676.00px;transform:scaleX(0.8741);transform-origin:0 0;">1.29003</span>
<span class="t" style="top:754px;font-size:12.5px;line-height:12.5px;color:#000;left:783.50px;transform:scaleX(0.8520);transform-origin:0 0;">0.00000</span>
<span class="t" style="top:754px;font-size:12.5px;line-height:12.5px;color:#000;left:890.00px;transform:scaleX(0.8741);transform-origin:0 0;">1.29037</span>
<span class="t" style="top:754px;font-size:12.5px;line-height:12.5px;color:#000;left:997.50px;transform:scaleX(0.8631);transform-origin:0 0;">1.28960</span>
<span class="t" style="top:754px;font-size:12.5px;line-height:12.5px;color:#000;left:1118.50px;transform:scaleX(0.8947);transform-origin:0 0;">-0.05</span>
<span class="t" style="top:754px;font-size:12.5px;line-height:12.5px;color:#000;left:1230.00px;transform:scaleX(0.8421);transform-origin:0 0;">0.00</span>
<span class="t" style="top:754px;font-size:12.5px;line-height:12.5px;color:#000;left:1370.00px;transform:scaleX(0.8772);transform-origin:0 0;">-0.43</span>
<svg class="r" style="left:1405px;top:757.5px;" width="7" height="6" viewBox="0 0 7 6"><path d="M0.700 0.500 L6.300 5.500 M6.300 0.500 L0.700 5.500" stroke="#808080" stroke-width="1.700"/></svg>
<div class="r" style="left:827px;top:771px;width:104px;height:18px;background:#60f060;"></div>
<svg class="r" style="left:19px;top:773px;" width="15" height="16" viewBox="0 0 15 16"><defs><linearGradient id="dg2" x1="0" y1="0" x2="1" y2="1"><stop offset="0" stop-color="#ffffff"/><stop offset="1" stop-color="#dcdcdc"/></linearGradient></defs><path d="M2 1.500 h5.500 l3 3 v8.500 q0 .5 -.5 .5 h-8 q-.5 0 -.5 -.5 v-11 q0 -.5 .5 -.5 z" fill="url(#dg2)" stroke="#666" stroke-width="1"/><path d="M7.500 1.500 v3 h3" fill="none" stroke="#666"/><circle cx="10.300" cy="11.800" r="3.100" fill="#2a8fe8" stroke="#1a5fb0" stroke-width=".6"/></svg>
<span class="t" style="top:774px;font-size:12.5px;line-height:12.5px;color:#000;left:38.00px;transform:scaleX(0.8517);transform-origin:0 0;">247327596</span>
<span class="t" style="top:774px;font-size:12.5px;line-height:12.5px;color:#000;left:243.50px;transform:scaleX(0.8675);transform-origin:0 0;">2017.08.21 22:36:25</span>
<span class="t" style="top:774px;font-size:12.5px;line-height:12.5px;color:#000;left:419.00px;transform:scaleX(0.9922);transform-origin:0 0;">buy</span>
<span class="t" style="top:774px;font-size:12.5px;line-height:12.5px;color:#000;left:491.00px;transform:scaleX(0.8626);transform-origin:0 0;">0.01</span>
<span class="t" style="top:774px;font-size:12.5px;line-height:12.5px;color:#000;left:571.00px;transform:scaleX(0.9426);transform-origin:0 0;">nzdusd</span>
<span class="t" style="top:774px;font-size:12.5px;line-height:12.5px;color:#000;left:676.00px;transform:scaleX(0.8741);transform-origin:0 0;">0.73236</span>
<span class="t" style="top:774px;font-size:12.5px;line-height:12.5px;color:#000;left:783.50px;transform:scaleX(0.8520);transform-origin:0 0;">0.00000</span>
<span class="t" style="top:774px;font-size:12.5px;line-height:12.5px;color:#000;left:890.00px;transform:scaleX(0.8741);transform-origin:0 0;">0.73251</span>
<span class="t" style="top:774px;font-size:12.5px;line-height:12.5px;color:#000;left:997.50px;transform:scaleX(0.8631);transform-origin:0 0;">0.73215</span>
<span class="t" style="top:774px;font-size:12.5px;line-height:12.5px;color:#000;left:1118.50px;transform:scaleX(0.8947);transform-origin:0 0;">-0.03</span>
<span class="t" style="top:774px;font-size:12.5px;line-height:12.5px;color:#000;left:1230.00px;transform:scaleX(0.8421);transform-origin:0 0;">0.00</span>
<span class="t" style="top:774px;font-size:12.5px;line-height:12.5px;color:#000;left:1370.00px;transform:scaleX(0.8772);transform-origin:0 0;">-0.21</span>
<svg class="r" style="left:1405px;top:777.5px;" width="7" height="6" viewBox="0 0 7 6"><path d="M0.700 0.500 L6.300 5.500 M6.300 0.500 L0.700 5.500" stroke="#808080" stroke-width="1.700"/></svg>
<svg class="r" style="left:19px;top:793px;" width="15" height="16" viewBox="0 0 15 16"><defs><linearGradient id="dg3" x1="0" y1="0" x2="1" y2="1"><stop offset="0" stop-color="#ffffff"/><stop offset="1" stop-color="#dcdcdc"/></linearGradient></defs><path d="M2 1.500 h5.500 l3 3 v8.500 q0 .5 -.5 .5 h-8 q-.5 0 -.5 -.5 v-11 q0 -.5 .5 -.5 z" fill="url(#dg3)" stroke="#666" stroke-width="1"/><path d="M7.500 1.500 v3 h3" fill="none" stroke="#666"/><circle cx="10.300" cy="11.800" r="3.100" fill="#e8481c" stroke="#a82a08" stroke-width=".6"/></svg>
<span class="t" style="top:794px;font-size:12.5px;line-height:12.5px;color:#000;left:38.00px;transform:scaleX(0.8517);transform-origin:0 0;">247327620</span>
<span class="t" style="top:794px;font-size:12.5px;line-height:12.5px;color:#000;left:243.50px;transform:scaleX(0.8675);transform-origin:0 0;">2017.08.21 22:33:02</span>
<span class="t" style="top:794px;font-size:12.5px;line-height:12.5px;color:#000;left:422.50px;transform:scaleX(0.8793);transform-origin:0 0;">sell</span>
<span class="t" style="top:794px;font-size:12.5px;line-height:12.5px;color:#000;left:491.00px;transform:scaleX(0.8626);transform-origin:0 0;">0.01</span>
<span class="t" style="top:794px;font-size:12.5px;line-height:12.5px;color:#000;left:571.50px;transform:scaleX(0.9302);transform-origin:0 0;">usdcad</span>
<span class="t" style="top:794px;font-size:12.5px;line-height:12.5px;color:#000;left:676.00px;transform:scaleX(0.8741);transform-origin:0 0;">1.25613</span>
<span class="t" style="top:794px;font-size:12.5px;line-height:12.5px;color:#000;left:783.50px;transform:scaleX(0.8520);transform-origin:0 0;">0.00000</span>
<span class="t" style="top:794px;font-size:12.5px;line-height:12.5px;color:#000;left:890.00px;transform:scaleX(0.8741);transform-origin:0 0;">1.25569</span>
<span class="t" style="top:794px;font-size:12.5px;line-height:12.5px;color:#000;left:997.50px;transform:scaleX(0.8631);transform-origin:0 0;">1.25695</span>
<span class="t" style="top:794px;font-size:12.5px;line-height:12.5px;color:#000;left:1118.50px;transform:scaleX(0.8947);transform-origin:0 0;">-0.04</span>
<span class="t" style="top:794px;font-size:12.5px;line-height:12.5px;color:#000;left:1230.00px;transform:scaleX(0.8421);transform-origin:0 0;">0.00</span>
<span class="t" style="top:794px;font-size:12.5px;line-height:12.5px;color:#000;left:1370.00px;transform:scaleX(0.8772);transform-origin:0 0;">-0.65</span>
<svg class="r" style="left:1405px;top:797.5px;" width="7" height="6" viewBox="0 0 7 6"><path d="M0.700 0.500 L6.300 5.500 M6.300 0.500 L0.700 5.500" stroke="#808080" stroke-width="1.700"/></svg>
<div class="r" style="left:1419px;top:706px;width:17px;height:105px;background:linear-gradient(90deg,#e6e6e6,#f4f4f4 40%,#f8f8f8)"></div>
<svg class="r" style="left:1423px;top:712px;" width="9" height="5" viewBox="0 0 9 5"><path d="M0.500 4.700 L4.500 0.500 L8.500 4.700 Z" fill="#555"/></svg>
<svg class="r" style="left:1423px;top:800.5px;" width="9" height="5" viewBox="0 0 9 5"><path d="M0.500 0.300 L4.500 4.500 L8.500 0.300 Z" fill="#555"/></svg>
<div class="r" style="left:1420px;top:724px;width:15px;height:15px;box-sizing:border-box;border:1px solid #9a9a9a;border-radius:2px;background:linear-gradient(90deg,#f6f6f6,#e2e2e2 50%,#cfcfcf)"></div>
<div class="r" style="left:68px;top:811px;width:1368px;height:1px;background:#000;"></div>
<div class="r" style="left:18px;top:811px;width:50px;height:20px;box-sizing:border-box;background:#fff;border-left:1px solid #000;border-right:1px solid #000;border-bottom:1px solid #000;box-shadow:1px 1px 0 #6a6a6a"></div>
<span class="t" style="top:815px;font-size:12.5px;line-height:12.5px;color:#000;left:28.20px;transform:scaleX(0.9254);transform-origin:0 0;">Trade</span>
<span class="t" style="top:815px;font-size:12.5px;line-height:12.5px;color:#6e6e6e;left:78.00px;transform:scaleX(0.8805);transform-origin:0 0;">Exposure</span>
<span class="t" style="top:815px;font-size:12.5px;line-height:12.5px;color:#6e6e6e;left:145.00px;transform:scaleX(0.9768);transform-origin:0 0;">Account History</span>
<span class="t" style="top:815px;font-size:12.5px;line-height:12.5px;color:#6e6e6e;left:251.00px;transform:scaleX(0.9115);transform-origin:0 0;">News</span>
<span class="t" style="top:815px;font-size:12.5px;line-height:12.5px;color:#6e6e6e;left:300.00px;transform:scaleX(0.9232);transform-origin:0 0;">Alerts</span>
<span class="t" style="top:815px;font-size:12.5px;line-height:12.5px;color:#6e6e6e;left:350.00px;transform:scaleX(0.9634);transform-origin:0 0;">Mailbox</span>
<span class="t" style="top:815px;font-size:12.5px;line-height:12.5px;color:#6e6e6e;left:419.00px;transform:scaleX(0.9554);transform-origin:0 0;">Market</span>
<span class="t" style="top:815px;font-size:12.5px;line-height:12.5px;color:#6e6e6e;left:488.00px;transform:scaleX(0.8902);transform-origin:0 0;">Signals</span>
<span class="t" style="top:815px;font-size:12.5px;line-height:12.5px;color:#6e6e6e;left:545.00px;transform:scaleX(0.8891);transform-origin:0 0;">Code Base</span>
<span class="t" style="top:815px;font-size:12.5px;line-height:12.5px;color:#6e6e6e;left:620.00px;transform:scaleX(0.8610);transform-origin:0 0;">Experts</span>
<span class="t" style="top:815px;font-size:12.5px;line-height:12.5px;color:#6e6e6e;left:677.00px;transform:scaleX(0.9146);transform-origin:0 0;">Journal</span>
<div class="r" style="left:135px;top:815px;width:1px;height:14px;background:#6a6a6a;"></div>
<div class="r" style="left:241px;top:815px;width:1px;height:14px;background:#6a6a6a;"></div>
<div class="r" style="left:290px;top:815px;width:1px;height:14px;background:#6a6a6a;"></div>
<div class="r" style="left:340px;top:815px;width:1px;height:14px;background:#6a6a6a;"></div>
<div class="r" style="left:409px;top:815px;width:1px;height:14px;background:#6a6a6a;"></div>
<div class="r" style="left:478px;top:815px;width:1px;height:14px;background:#6a6a6a;"></div>
<div class="r" style="left:535px;top:815px;width:1px;height:14px;background:#6a6a6a;"></div>
<div class="r" style="left:610px;top:815px;width:1px;height:14px;background:#6a6a6a;"></div>
<div class="r" style="left:667px;top:815px;width:1px;height:14px;background:#6a6a6a;"></div>
<div class="r" style="left:725px;top:815px;width:1px;height:14px;background:#6a6a6a;"></div>
<span class="t" style="top:822px;font-size:10px;line-height:10px;color:#f01020;left:394.00px;font-weight:bold;text-rendering:geometricPrecision;transform:scaleX(.88);transform-origin:0 0;">9</span>
<span class="t" style="top:822px;font-size:10px;line-height:10px;color:#f01020;left:458.00px;transform:scaleX(0.8449);transform-origin:0 0;font-weight:bold;text-rendering:geometricPrecision;">26</span>
<div class="r" style="left:0px;top:833px;width:1440px;height:1px;background:#f7f7f7;"></div>
<div class="r" style="left:0px;top:834px;width:1440px;height:2px;background:#fdfdfd;"></div>
<div class="r" style="left:0px;top:836px;width:1440px;height:1px;background:#a6a6a6;"></div>
<div class="r" style="left:0px;top:837px;width:1440px;height:1px;background:#fdfdfd;"></div>
<div class="r" style="left:0px;top:838px;width:1440px;height:21px;background:#f0f0f0;"></div>
<div class="r" style="left:0px;top:859px;width:1440px;height:1px;background:#fbfbfb;"></div>
<span class="t" style="top:844px;font-size:12px;line-height:12px;color:#000;left:2.80px;transform:scaleX(0.9147);transform-origin:0 0;">For Help, press F1</span>
<div class="r" style="left:746px;top:841px;width:1px;height:18px;background:#a8a8a8;"></div>
<div class="r" style="left:747px;top:841px;width:1px;height:18px;background:#fbfbfb;"></div>
<div class="r" style="left:862px;top:841px;width:1px;height:18px;background:#a8a8a8;"></div>
<div class="r" style="left:863px;top:841px;width:1px;height:18px;background:#fbfbfb;"></div>
<div class="r" style="left:964px;top:841px;width:1px;height:18px;background:#a8a8a8;"></div>
<div class="r" style="left:965px;top:841px;width:1px;height:18px;background:#fbfbfb;"></div>
<div class="r" style="left:1035px;top:841px;width:1px;height:18px;background:#a8a8a8;"></div>
<div class="r" style="left:1036px;top:841px;width:1px;height:18px;background:#fbfbfb;"></div>
<div class="r" style="left:1106px;top:841px;width:1px;height:18px;background:#a8a8a8;"></div>
<div class="r" style="left:1107px;top:841px;width:1px;height:18px;background:#fbfbfb;"></div>
<div class="r" style="left:1174px;top:841px;width:1px;height:18px;background:#a8a8a8;"></div>
<div class="r" style="left:1175px;top:841px;width:1px;height:18px;background:#fbfbfb;"></div>
<div class="r" style="left:1245px;top:841px;width:1px;height:18px;background:#a8a8a8;"></div>
<div class="r" style="left:1246px;top:841px;width:1px;height:18px;background:#fbfbfb;"></div>
<div class="r" style="left:1310px;top:841px;width:1px;height:18px;background:#a8a8a8;"></div>
<div class="r" style="left:1311px;top:841px;width:1px;height:18px;background:#fbfbfb;"></div>
<span class="t" style="top:844px;font-size:12px;line-height:12px;color:#000;left:752.00px;transform:scaleX(0.8736);transform-origin:0 0;">125</span>
<svg class="r" style="left:1316px;top:843px;shape-rendering:crispEdges;" width="23" height="13" viewBox="0 0 23 13"><rect x="-1" y="-1" width="25" height="15" fill="#f8f8f8"/><rect x="0" y="0" width="2" height="9" fill="#4c7a00"/><rect x="0" y="10" width="2" height="3" fill="#8b0000"/><rect x="3" y="0" width="2" height="8" fill="#4c7a00"/><rect x="3" y="9" width="2" height="4" fill="#8b0000"/><rect x="6" y="0" width="2" height="7" fill="#4c7a00"/><rect x="6" y="8" width="2" height="5" fill="#8b0000"/><rect x="9" y="0" width="2" height="6" fill="#4c7a00"/><rect x="9" y="7" width="2" height="6" fill="#8b0000"/><rect x="12" y="0" width="2" height="5" fill="#4c7a00"/><rect x="12" y="6" width="2" height="7" fill="#8b0000"/><rect x="15" y="0" width="2" height="4" fill="#4c7a00"/><rect x="15" y="5" width="2" height="8" fill="#8b0000"/><rect x="18" y="0" width="2" height="3" fill="#4c7a00"/><rect x="18" y="4" width="2" height="9" fill="#8b0000"/><rect x="21" y="0" width="2" height="2" fill="#4c7a00"/><rect x="21" y="3" width="2" height="10" fill="#8b0000"/></svg>
<span class="t" style="top:844px;font-size:12px;line-height:12px;color:#000;left:1342.80px;transform:scaleX(0.9522);transform-origin:0 0;">941/54 kb</span>
<div class="r" style="left:0px;top:860px;width:1440px;height:1px;background:#0a0808;"></div>
<div class="r" style="left:0;top:861px;width:1440px;height:7px;background:linear-gradient(180deg,#0c0a0a,#1a1616)"></div>
<div class="r" style="left:500px;top:861px;width:926px;height:1px;background:linear-gradient(90deg,rgba(110,104,103,0),rgba(110,104,103,1) 300px)"></div>
<div class="r" style="left:13px;top:861px;width:30px;height:30px;border-radius:50%;background:radial-gradient(circle at 50% 40%,#b9c6d6,#7f93ab 60%,#3f5873);border:1px solid #2c4a6a"></div>
<div class="r" style="left:60px;top:861px;width:58px;height:8px;box-sizing:border-box;border:1px solid #b8b8b8;border-bottom:none;border-radius:2px 2px 0 0;background:linear-gradient(180deg,#8a8a8a,#555555)"></div>
<div class="r" style="left:431px;top:861px;width:59px;height:8px;box-sizing:border-box;border:1px solid #b8b8b8;border-bottom:none;border-radius:2px 2px 0 0;background:linear-gradient(180deg,#8a8a8a,#555555)"></div>
<div class="r" style="left:80px;top:864px;width:18px;height:18px;border-radius:50%;background:#e8101c"></div>
<div class="r" style="left:137px;top:866px;width:15px;height:2px;background:#e8c878;"></div>
<div class="r" style="left:207px;top:863px;width:20px;height:10px;border-radius:50%;border-top:2px solid #f0c020;transform:rotate(-18deg)"></div>
<div class="r" style="left:327px;top:865px;width:19px;height:19px;border-radius:50%;background:#18c048"></div>
<div class="r" style="left:390px;top:865px;width:19px;height:19px;border-radius:50%;background:#d85048"></div>
<div class="r" style="left:445px;top:864px;width:32px;height:4px;background:#d8101c;"></div>
<div class="r" style="left:458px;top:866px;width:6px;height:2px;background:#ffffff;"></div>
<div class="r" style="left:1426px;top:861px;width:14px;height:8px;box-sizing:border-box;border:1px solid #8a8a8a;background:linear-gradient(180deg,#5e5e5e,#2c2c2c)"></div>
</body></html>
